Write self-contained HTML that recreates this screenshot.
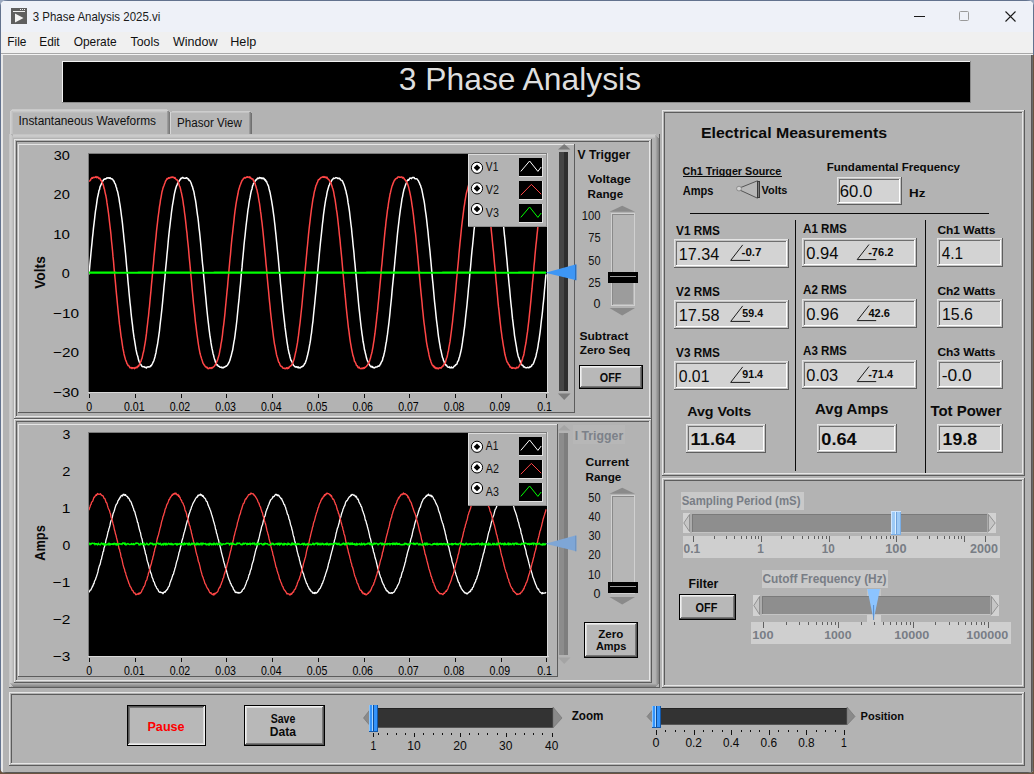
<!DOCTYPE html>
<html><head><meta charset="utf-8"><style>
html,body{margin:0;padding:0;background:#6b5440;width:1034px;height:774px;overflow:hidden}
svg{display:block;font-family:"Liberation Sans",sans-serif}
</style></head><body>
<svg width="1034" height="774" viewBox="0 0 1034 774">
<defs><clipPath id="win"><path d="M0,8 Q0,0 8,0 H1026 Q1034,0 1034,8 V767 Q1034,773 1028,773 H6 Q0,773 0,767 Z"/></clipPath><clipPath id="vplot"><rect x="89" y="154" width="458" height="238"/></clipPath><clipPath id="iplot"><rect x="89" y="433" width="458" height="223"/></clipPath></defs>
<rect x="0" y="0" width="1034" height="40" fill="#9aa8c0" />
<g clip-path="url(#win)">
<rect x="0" y="0" width="1034" height="774" fill="#62728e" />
<rect x="1" y="1" width="1032" height="772" fill="#e8e8e8" />
<rect x="1" y="1" width="1032" height="31" fill="#eef1f8" />
<rect x="1" y="32" width="1032" height="21" fill="#f0f0f0" />
<rect x="1" y="53" width="1032" height="1" fill="#a8a8a8" />
<rect x="1" y="54" width="1032" height="1" fill="#f4f4f4" />
<rect x="3" y="55" width="1028" height="717" fill="#b3b3b3" />
<rect x="1031" y="55" width="1" height="718" fill="#585858" />
<rect x="1032" y="55" width="1" height="718" fill="#6a6a6a" />
<rect x="3" y="772" width="1030" height="1" fill="#585858" />
<rect x="1033" y="55" width="1" height="719" fill="#6b5440" />
<rect x="0" y="773" width="1034" height="1" fill="#6b5440" />
</g>
<rect x="11" y="8" width="16" height="16" fill="#5f5f5f" />
<rect x="13" y="11" width="12" height="1" fill="#f0f0f0" />
<rect x="20" y="9" width="1" height="1" fill="#f0f0f0" />
<rect x="22" y="9" width="1" height="1" fill="#f0f0f0" />
<rect x="24" y="9" width="1" height="1" fill="#f0f0f0" />
<polygon points="15.00,13.50 15.00,22.50 23.50,18.00" fill="#f4f4f4" stroke="none" />
<text transform="translate(32.77,20.80) scale(0.9463,1)" font-size="12.14" font-weight="normal" fill="#1a1a1a" >3 Phase Analysis 2025.vi</text>
<rect x="914" y="16" width="11" height="1" fill="#1a1a1a" />
<rect x="959.5" y="11.5" width="9" height="9" rx="1" fill="none" stroke="#9a9a9a" stroke-width="1"/>
<path d="M1005.5,11.5 L1015.5,21.5 M1015.5,11.5 L1005.5,21.5" stroke="#1a1a1a" stroke-width="1.1" fill="none" />
<text transform="translate(7.32,46.00) scale(0.9773,1)" font-size="12.14" font-weight="normal" fill="#101010" >File</text>
<text transform="translate(39.22,46.00) scale(0.9783,1)" font-size="12.14" font-weight="normal" fill="#101010" >Edit</text>
<text transform="translate(73.63,46.00) scale(0.9471,1)" font-size="12.59" font-weight="normal" fill="#101010" >Operate</text>
<text transform="translate(130.52,46.00) scale(1.0170,1)" font-size="12.14" font-weight="normal" fill="#101010" >Tools</text>
<text transform="translate(172.94,46.00) scale(1.0313,1)" font-size="12.14" font-weight="normal" fill="#101010" >Window</text>
<text transform="translate(230.26,46.00) scale(1.0409,1)" font-size="12.14" font-weight="normal" fill="#101010" >Help</text>
<rect x="62" y="61" width="908" height="41" fill="#000" />
<rect x="62" y="61" width="908" height="1" fill="#f2f2f2" />
<rect x="62" y="61" width="1" height="41" fill="#f2f2f2" />
<rect x="970" y="61" width="1" height="42" fill="#8a8a8a" />
<rect x="62" y="102" width="909" height="1" fill="#8a8a8a" />
<text transform="translate(398.81,90.20) scale(1.0208,1)" font-size="31.17" font-weight="normal" fill="#dedede" >3 Phase Analysis</text>
<rect x="170" y="111" width="82" height="24" fill="#b6b6b6" />
<rect x="172" y="111" width="78" height="1" fill="#cdcdcd" />
<rect x="171" y="112" width="79" height="1" fill="#c4c4c4" />
<rect x="170" y="112" width="1" height="23" fill="#d6d6d6" />
<rect x="249" y="112" width="1" height="23" fill="#9a9a9a" />
<rect x="250" y="112" width="1" height="23" fill="#808080" />
<rect x="251" y="113" width="1" height="22" fill="#707070" />
<text transform="translate(177.04,127.00) scale(0.9346,1)" font-size="12.41" font-weight="normal" fill="#101010" >Phasor View</text>
<rect x="10" y="109" width="160" height="29" fill="#b7b7b7" />
<rect x="12" y="109" width="155" height="1" fill="#c9c9c9" />
<rect x="11" y="110" width="157" height="1" fill="#cfcfcf" />
<rect x="11" y="111" width="157" height="1" fill="#c6c6c6" />
<rect x="11" y="112" width="157" height="1" fill="#bdbdbd" />
<rect x="10" y="111" width="1" height="27" fill="#cfcfcf" />
<rect x="11" y="111" width="1" height="27" fill="#c8c8c8" />
<rect x="12" y="111" width="1" height="27" fill="#c0c0c0" />
<rect x="167" y="111" width="1" height="27" fill="#9c9c9c" />
<rect x="168" y="111" width="1" height="27" fill="#8a8a8a" />
<rect x="169" y="112" width="1" height="26" fill="#7a7a7a" />
<text transform="translate(18.50,124.80) scale(0.9894,1)" font-size="12.02" font-weight="normal" fill="#101010" >Instantaneous Waveforms</text>
<rect x="9" y="134" width="651" height="554" fill="#b3b3b3" />
<rect x="13" y="134" width="643" height="1" fill="#c4c4c4" />
<rect x="13" y="135" width="643" height="1" fill="#cbcbcb" />
<rect x="13" y="136" width="644" height="1" fill="#c8c8c8" />
<rect x="13" y="137" width="644" height="1" fill="#c0c0c0" />
<rect x="9" y="134" width="1" height="554" fill="#c6c6c6" />
<rect x="10" y="134" width="1" height="553" fill="#cdcdcd" />
<rect x="11" y="135" width="1" height="551" fill="#c9c9c9" />
<rect x="12" y="136" width="1" height="549" fill="#c0c0c0" />
<rect x="655" y="135" width="1" height="552" fill="#b0b0b0" />
<rect x="10" y="683" width="649" height="1" fill="#b0b0b0" />
<rect x="656" y="136" width="1" height="550" fill="#a2a2a2" />
<rect x="11" y="684" width="647" height="1" fill="#a2a2a2" />
<rect x="657" y="137" width="1" height="548" fill="#949494" />
<rect x="12" y="685" width="645" height="1" fill="#949494" />
<rect x="658" y="138" width="1" height="546" fill="#868686" />
<rect x="13" y="686" width="643" height="1" fill="#868686" />
<rect x="9" y="687" width="651" height="1" fill="#5e5e5e" />
<rect x="659" y="134" width="1" height="554" fill="#5e5e5e" />
<rect x="14" y="139" width="637" height="1" fill="#e6e6e6" />
<rect x="14" y="139" width="1" height="279" fill="#e6e6e6" />
<rect x="14" y="418" width="638" height="1" fill="#5c5c5c" />
<rect x="651" y="139" width="1" height="280" fill="#5c5c5c" />
<rect x="16" y="141" width="633" height="1" fill="#5c5c5c" />
<rect x="16" y="141" width="1" height="275" fill="#5c5c5c" />
<rect x="16" y="416" width="634" height="1" fill="#e6e6e6" />
<rect x="649" y="141" width="1" height="276" fill="#e6e6e6" />
<rect x="14" y="419" width="637" height="1" fill="#e6e6e6" />
<rect x="14" y="419" width="1" height="263" fill="#e6e6e6" />
<rect x="14" y="682" width="638" height="1" fill="#5c5c5c" />
<rect x="651" y="419" width="1" height="264" fill="#5c5c5c" />
<rect x="16" y="421" width="633" height="1" fill="#5c5c5c" />
<rect x="16" y="421" width="1" height="259" fill="#5c5c5c" />
<rect x="16" y="680" width="634" height="1" fill="#e6e6e6" />
<rect x="649" y="421" width="1" height="260" fill="#e6e6e6" />
<rect x="662" y="110" width="362" height="1" fill="#e6e6e6" />
<rect x="662" y="110" width="1" height="365" fill="#e6e6e6" />
<rect x="662" y="475" width="363" height="1" fill="#5c5c5c" />
<rect x="1024" y="110" width="1" height="366" fill="#5c5c5c" />
<rect x="664" y="112" width="358" height="1" fill="#5c5c5c" />
<rect x="664" y="112" width="1" height="361" fill="#5c5c5c" />
<rect x="664" y="473" width="359" height="1" fill="#e6e6e6" />
<rect x="1022" y="112" width="1" height="362" fill="#e6e6e6" />
<rect x="662" y="478" width="362" height="1" fill="#e6e6e6" />
<rect x="662" y="478" width="1" height="209" fill="#e6e6e6" />
<rect x="662" y="687" width="363" height="1" fill="#5c5c5c" />
<rect x="1024" y="478" width="1" height="210" fill="#5c5c5c" />
<rect x="664" y="480" width="358" height="1" fill="#5c5c5c" />
<rect x="664" y="480" width="1" height="205" fill="#5c5c5c" />
<rect x="664" y="685" width="359" height="1" fill="#e6e6e6" />
<rect x="1022" y="480" width="1" height="206" fill="#e6e6e6" />
<rect x="9" y="692" width="1015" height="1" fill="#e6e6e6" />
<rect x="9" y="692" width="1" height="73" fill="#e6e6e6" />
<rect x="9" y="765" width="1016" height="1" fill="#5c5c5c" />
<rect x="1024" y="692" width="1" height="74" fill="#5c5c5c" />
<rect x="11" y="694" width="1011" height="1" fill="#5c5c5c" />
<rect x="11" y="694" width="1" height="69" fill="#5c5c5c" />
<rect x="11" y="763" width="1012" height="1" fill="#e6e6e6" />
<rect x="1022" y="694" width="1" height="70" fill="#e6e6e6" />
<rect x="18" y="144" width="557" height="1" fill="#e6e6e6" />
<rect x="18" y="144" width="1" height="269" fill="#e6e6e6" />
<rect x="18" y="412" width="557" height="1" fill="#5c5c5c" />
<rect x="574" y="144" width="1" height="269" fill="#5c5c5c" />
<rect x="89" y="154" width="458" height="238" fill="#000" />
<rect x="88" y="153" width="460" height="1" fill="#7a7a7a" />
<rect x="88" y="153" width="1" height="240" fill="#7a7a7a" />
<rect x="88" y="392" width="461" height="1" fill="#d8d8d8" />
<rect x="547" y="153" width="1" height="240" fill="#d8d8d8" />
<g clip-path="url(#vplot)">
<polyline points="89.0,274.53 89.5,269.28 90.0,263.24 90.5,258.53 91.0,252.65 91.5,247.62 92.0,242.86 92.5,237.33 93.0,233.05 93.5,227.92 94.0,223.87 94.5,219.57 95.0,215.12 95.5,210.81 96.0,208.04 96.5,204.56 97.0,200.95 97.5,197.68 98.0,195.48 98.5,193.28 99.0,190.41 99.5,189.56 100.0,186.84 100.5,185.97 101.0,184.79 101.5,183.64 102.0,182.39 102.5,180.92 103.0,180.94 103.5,179.85 104.0,179.28 104.5,179.18 105.0,178.65 105.5,178.96 106.0,178.76 106.5,178.44 107.0,177.77 107.5,178.01 108.0,178.11 108.5,177.79 109.0,177.99 109.5,178.25 110.0,177.77 110.5,178.05 111.0,178.80 111.5,178.69 112.0,179.09 112.5,179.11 113.0,179.82 113.5,180.98 114.0,180.92 114.5,182.85 115.0,183.55 115.5,184.37 116.0,186.49 116.5,187.68 117.0,190.02 117.5,191.28 118.0,193.40 118.5,196.10 119.0,198.44 119.5,202.05 120.0,204.78 120.5,208.33 121.0,212.00 121.5,216.04 122.0,219.69 122.5,223.89 123.0,228.98 123.5,233.46 124.0,239.05 124.5,243.32 125.0,248.54 125.5,253.39 126.0,258.94 126.5,264.99 127.0,270.31 127.5,275.43 128.0,281.64 128.5,286.52 129.0,292.22 129.5,297.53 130.0,302.75 130.5,306.92 131.0,312.54 131.5,317.10 132.0,321.44 132.5,325.17 133.0,330.21 133.5,333.64 134.0,337.17 134.5,340.17 135.0,343.41 135.5,346.29 136.0,349.67 136.5,351.96 137.0,354.24 137.5,355.61 138.0,357.31 138.5,359.85 139.0,361.21 139.5,362.35 140.0,363.39 140.5,363.98 141.0,364.62 141.5,365.64 142.0,366.47 142.5,366.40 143.0,366.80 143.5,366.84 144.0,366.59 144.5,367.06 145.0,367.38 145.5,367.33 146.0,367.30 146.5,368.04 147.0,367.00 147.5,367.07 148.0,366.85 148.5,366.79 149.0,367.07 149.5,366.80 150.0,366.81 150.5,365.76 151.0,365.93 151.5,365.30 152.0,364.39 152.5,363.57 153.0,362.32 153.5,361.47 154.0,360.16 154.5,358.42 155.0,356.72 155.5,354.43 156.0,352.63 156.5,349.20 157.0,346.84 157.5,344.49 158.0,341.23 158.5,337.73 159.0,334.09 159.5,330.53 160.0,325.59 160.5,321.13 161.0,317.26 161.5,312.56 162.0,308.19 162.5,303.17 163.0,297.74 163.5,292.59 164.0,286.58 164.5,281.98 165.0,276.70 165.5,270.14 166.0,265.20 166.5,260.24 167.0,254.41 167.5,249.76 168.0,243.99 168.5,238.42 169.0,233.66 169.5,229.14 170.0,225.12 170.5,220.65 171.0,216.75 171.5,212.12 172.0,208.73 172.5,204.99 173.0,202.32 173.5,199.48 174.0,196.06 174.5,193.36 175.0,191.26 175.5,189.28 176.0,187.45 176.5,185.93 177.0,185.12 177.5,183.54 178.0,182.66 178.5,182.13 179.0,181.36 179.5,180.41 180.0,179.89 180.5,178.93 181.0,178.26 181.5,178.58 182.0,177.78 182.5,177.55 183.0,177.48 183.5,178.10 184.0,178.23 184.5,178.22 185.0,178.28 185.5,178.33 186.0,177.93 186.5,177.75 187.0,178.02 187.5,178.70 188.0,178.82 188.5,179.05 189.0,180.39 189.5,180.31 190.0,180.74 190.5,181.74 191.0,182.79 191.5,184.27 192.0,185.97 192.5,186.77 193.0,189.05 193.5,190.43 194.0,192.39 194.5,195.46 195.0,198.08 195.5,200.29 196.0,203.66 196.5,207.66 197.0,211.30 197.5,215.08 198.0,218.22 198.5,222.59 199.0,227.84 199.5,231.68 200.0,236.32 200.5,241.68 201.0,247.16 201.5,252.15 202.0,257.97 202.5,263.50 203.0,267.80 203.5,273.63 204.0,279.23 204.5,284.17 205.0,290.13 205.5,294.89 206.0,300.13 206.5,305.93 207.0,310.79 207.5,315.50 208.0,320.13 208.5,324.10 209.0,328.66 209.5,332.41 210.0,336.48 210.5,339.03 211.0,342.94 211.5,345.82 212.0,348.44 212.5,350.58 213.0,353.45 213.5,354.93 214.0,357.28 214.5,358.89 215.0,360.35 215.5,362.22 216.0,362.82 216.5,364.06 217.0,365.08 217.5,364.80 218.0,366.10 218.5,366.20 219.0,366.27 219.5,366.77 220.0,367.27 220.5,367.22 221.0,367.30 221.5,367.11 222.0,367.97 222.5,367.44 223.0,367.79 223.5,367.70 224.0,367.02 224.5,367.19 225.0,366.94 225.5,366.46 226.0,365.97 226.5,366.14 227.0,365.46 227.5,365.00 228.0,364.29 228.5,363.24 229.0,362.55 229.5,361.32 230.0,360.07 230.5,358.03 231.0,356.62 231.5,354.50 232.0,352.30 232.5,350.76 233.0,347.82 233.5,344.54 234.0,341.60 234.5,339.13 235.0,335.61 235.5,331.46 236.0,327.89 236.5,323.47 237.0,319.25 237.5,313.92 238.0,308.99 238.5,303.90 239.0,299.69 239.5,293.81 240.0,288.57 240.5,283.81 241.0,277.50 241.5,271.94 242.0,267.38 242.5,261.08 243.0,256.36 243.5,250.95 244.0,245.15 244.5,240.26 245.0,236.11 245.5,231.01 246.0,226.31 246.5,222.11 247.0,218.07 247.5,213.94 248.0,209.70 248.5,207.02 249.0,203.09 249.5,200.18 250.0,197.88 250.5,194.94 251.0,192.26 251.5,190.29 252.0,188.93 252.5,186.15 253.0,184.91 253.5,183.39 254.0,183.30 254.5,182.14 255.0,181.59 255.5,180.02 256.0,180.04 256.5,179.74 257.0,179.01 257.5,178.12 258.0,177.99 258.5,178.47 259.0,178.47 259.5,177.46 260.0,177.82 260.5,177.65 261.0,178.39 261.5,178.48 262.0,177.82 262.5,178.26 263.0,178.86 263.5,178.06 264.0,178.72 264.5,178.90 265.0,180.22 265.5,179.87 266.0,181.49 266.5,181.35 267.0,182.79 267.5,184.03 268.0,185.06 268.5,186.08 269.0,188.52 269.5,190.56 270.0,192.17 270.5,194.83 271.0,197.53 271.5,200.25 272.0,203.40 272.5,206.48 273.0,209.86 273.5,213.60 274.0,217.02 274.5,221.77 275.0,225.91 275.5,230.88 276.0,235.44 276.5,240.76 277.0,245.56 277.5,251.03 278.0,255.47 278.5,261.06 279.0,266.91 279.5,272.02 280.0,276.93 280.5,283.35 281.0,287.89 281.5,293.66 282.0,298.81 282.5,303.51 283.0,309.00 283.5,313.68 284.0,318.10 284.5,322.19 285.0,327.19 285.5,330.63 286.0,334.58 286.5,338.22 287.0,341.82 287.5,344.98 288.0,348.17 288.5,350.69 289.0,353.13 289.5,354.48 290.0,356.98 290.5,358.80 291.0,360.41 291.5,360.84 292.0,361.96 292.5,363.19 293.0,364.49 293.5,365.25 294.0,365.79 294.5,366.08 295.0,366.84 295.5,366.81 296.0,367.28 296.5,366.64 297.0,366.77 297.5,367.37 298.0,367.79 298.5,366.96 299.0,367.73 299.5,367.63 300.0,367.97 300.5,367.39 301.0,367.11 301.5,366.86 302.0,366.93 302.5,366.20 303.0,366.35 303.5,365.49 304.0,365.04 304.5,363.88 305.0,363.38 305.5,362.32 306.0,360.74 306.5,359.39 307.0,357.34 307.5,355.57 308.0,353.26 308.5,351.10 309.0,348.52 309.5,345.59 310.0,343.19 310.5,340.04 311.0,335.79 311.5,333.09 312.0,328.48 312.5,324.43 313.0,320.78 313.5,315.28 314.0,310.48 314.5,305.89 315.0,300.72 315.5,295.45 316.0,290.97 316.5,285.15 317.0,279.76 317.5,273.92 318.0,268.50 318.5,263.03 319.0,257.93 319.5,252.23 320.0,247.24 320.5,242.10 321.0,237.66 321.5,233.06 322.0,228.27 322.5,223.53 323.0,219.56 323.5,214.63 324.0,211.12 324.5,207.44 325.0,204.08 325.5,200.89 326.0,198.23 326.5,196.16 327.0,192.81 327.5,190.68 328.0,189.01 328.5,187.23 329.0,185.53 329.5,184.88 330.0,182.90 330.5,182.46 331.0,181.80 331.5,180.84 332.0,179.68 332.5,179.80 333.0,178.75 333.5,178.14 334.0,178.45 334.5,178.38 335.0,178.12 335.5,177.77 336.0,177.60 336.5,177.75 337.0,177.73 337.5,178.44 338.0,178.43 338.5,178.42 339.0,177.99 339.5,178.73 340.0,178.69 340.5,179.70 341.0,180.08 341.5,180.36 342.0,180.52 342.5,181.27 343.0,182.19 343.5,183.70 344.0,184.66 344.5,186.12 345.0,187.71 345.5,189.92 346.0,191.01 346.5,194.08 347.0,195.62 347.5,198.37 348.0,202.41 348.5,205.06 349.0,208.06 349.5,211.54 350.0,216.05 350.5,220.37 351.0,224.77 351.5,228.41 352.0,234.00 352.5,238.43 353.0,243.98 353.5,248.68 354.0,253.43 354.5,259.76 355.0,264.35 355.5,270.16 356.0,275.17 356.5,280.83 357.0,286.80 357.5,291.35 358.0,297.09 358.5,302.79 359.0,307.83 359.5,312.11 360.0,316.86 360.5,321.54 361.0,326.04 361.5,329.90 362.0,333.80 362.5,336.82 363.0,341.22 363.5,343.50 364.0,346.32 364.5,349.86 365.0,351.35 365.5,353.82 366.0,355.59 366.5,358.10 367.0,359.59 367.5,360.95 368.0,361.44 368.5,362.97 369.0,364.13 369.5,364.81 370.0,365.62 370.5,366.42 371.0,366.78 371.5,366.25 372.0,367.18 372.5,366.61 373.0,367.59 373.5,367.68 374.0,367.46 374.5,367.88 375.0,367.66 375.5,366.93 376.0,366.95 376.5,366.93 377.0,366.99 377.5,366.45 378.0,366.15 378.5,366.28 379.0,365.66 379.5,365.94 380.0,364.51 380.5,364.10 381.0,362.86 381.5,361.96 382.0,361.19 382.5,360.11 383.0,357.50 383.5,356.69 384.0,354.30 384.5,352.26 385.0,349.88 385.5,346.69 386.0,343.51 386.5,341.22 387.0,337.36 387.5,334.17 388.0,330.01 388.5,326.13 389.0,322.11 389.5,317.62 390.0,312.89 390.5,307.21 391.0,302.70 391.5,297.89 392.0,291.83 392.5,286.38 393.0,281.63 393.5,276.56 394.0,271.04 394.5,265.72 395.0,260.01 395.5,254.95 396.0,249.50 396.5,244.31 397.0,238.91 397.5,233.64 398.0,229.08 398.5,224.94 399.0,220.59 399.5,216.33 400.0,212.59 400.5,208.96 401.0,205.84 401.5,202.38 402.0,198.59 402.5,196.87 403.0,193.93 403.5,191.53 404.0,189.22 404.5,188.17 405.0,186.49 405.5,185.10 406.0,183.68 406.5,182.55 407.0,181.03 407.5,180.38 408.0,179.70 408.5,180.17 409.0,179.72 409.5,178.55 410.0,178.05 410.5,178.33 411.0,178.03 411.5,178.61 412.0,178.07 412.5,177.39 413.0,177.50 413.5,177.49 414.0,177.42 414.5,178.38 415.0,178.69 415.5,178.83 416.0,178.65 416.5,178.78 417.0,178.88 417.5,179.64 418.0,180.33 418.5,180.91 419.0,182.13 419.5,183.02 420.0,184.80 420.5,185.25 421.0,187.44 421.5,188.35 422.0,190.61 422.5,193.18 423.0,195.78 423.5,198.26 424.0,200.66 424.5,203.69 425.0,207.73 425.5,211.36 426.0,214.64 426.5,218.60 427.0,223.09 427.5,227.75 428.0,231.94 428.5,237.47 429.0,242.10 429.5,247.03 430.0,251.66 430.5,257.36 431.0,262.46 431.5,268.39 432.0,274.13 432.5,279.56 433.0,284.13 433.5,289.81 434.0,295.56 434.5,301.09 435.0,305.58 435.5,310.29 436.0,315.35 436.5,320.11 437.0,324.00 437.5,327.86 438.0,332.64 438.5,336.59 439.0,339.71 439.5,342.86 440.0,345.55 440.5,348.90 441.0,350.71 441.5,353.07 442.0,355.42 442.5,357.63 443.0,358.37 443.5,360.60 444.0,361.27 444.5,363.06 445.0,364.02 445.5,364.17 446.0,365.40 446.5,365.18 447.0,366.18 447.5,366.91 448.0,367.17 448.5,367.16 449.0,367.04 449.5,366.83 450.0,367.87 450.5,367.63 451.0,367.85 451.5,366.93 452.0,367.86 452.5,367.87 453.0,367.73 453.5,367.14 454.0,366.30 454.5,366.00 455.0,365.79 455.5,365.00 456.0,364.49 456.5,364.51 457.0,363.85 457.5,361.98 458.0,361.06 458.5,360.60 459.0,358.35 459.5,357.00 460.0,355.10 460.5,353.03 461.0,350.87 461.5,348.48 462.0,345.33 462.5,342.18 463.0,338.16 463.5,335.61 464.0,330.83 464.5,327.73 465.0,323.34 465.5,318.36 466.0,313.74 466.5,309.41 467.0,304.91 467.5,299.31 468.0,294.22 468.5,288.26 469.0,283.75 469.5,278.11 470.0,272.02 470.5,267.60 471.0,261.72 471.5,255.87 472.0,250.62 472.5,246.28 473.0,241.21 473.5,236.23 474.0,230.43 474.5,226.61 475.0,221.62 475.5,217.24 476.0,213.92 476.5,210.24 477.0,205.90 477.5,203.02 478.0,200.40 478.5,197.05 479.0,194.96 479.5,192.67 480.0,190.89 480.5,188.11 481.0,186.24 481.5,185.09 482.0,183.42 482.5,183.39 483.0,182.18 483.5,181.07 484.0,179.80 484.5,179.23 485.0,179.43 485.5,179.21 486.0,178.69 486.5,178.38 487.0,177.68 487.5,178.43 488.0,177.60 488.5,177.62 489.0,177.50 489.5,177.58 490.0,177.83 490.5,178.25 491.0,178.39 491.5,178.51 492.0,178.25 492.5,179.38 493.0,179.62 493.5,179.42 494.0,180.59 494.5,181.49 495.0,182.33 495.5,182.67 496.0,184.05 496.5,184.55 497.0,186.13 497.5,187.67 498.0,190.40 498.5,192.70 499.0,195.00 499.5,197.06 500.0,199.59 500.5,202.93 501.0,206.45 501.5,209.73 502.0,213.22 502.5,217.13 503.0,221.22 503.5,225.50 504.0,230.30 504.5,235.71 505.0,239.78 505.5,245.51 506.0,250.37 506.5,255.90 507.0,260.83 507.5,266.90 508.0,272.29 508.5,277.75 509.0,283.29 509.5,287.81 510.0,293.49 510.5,299.01 511.0,304.03 511.5,308.29 512.0,313.68 512.5,318.64 513.0,322.40 513.5,326.82 514.0,330.44 514.5,335.30 515.0,338.42 515.5,341.33 516.0,344.39 516.5,347.15 517.0,350.79 517.5,352.87 518.0,355.22 518.5,357.06 519.0,357.84 519.5,359.82 520.0,360.73 520.5,362.55 521.0,362.95 521.5,364.29 522.0,365.23 522.5,365.21 523.0,365.50 523.5,366.90 524.0,366.63 524.5,366.85 525.0,367.52 525.5,367.49 526.0,367.85 526.5,367.84 527.0,367.80 527.5,367.38 528.0,367.28 528.5,367.73 529.0,367.84 529.5,367.29 530.0,366.65 530.5,366.95 531.0,366.43 531.5,366.11 532.0,364.86 532.5,364.49 533.0,364.28 533.5,363.31 534.0,361.88 534.5,360.44 535.0,358.91 535.5,357.93 536.0,356.01 536.5,353.33 537.0,351.39 537.5,349.04 538.0,346.27 538.5,342.51 539.0,340.05 539.5,336.29 540.0,332.84 540.5,328.84 541.0,324.16 541.5,319.65 542.0,315.84 542.5,311.31 543.0,305.77 543.5,301.35 544.0,296.41 544.5,290.06 545.0,285.27 545.5,279.38 546.0,274.43" fill="none" stroke="#ffffff" stroke-width="1.5" stroke-linejoin="round"/>
<polyline points="89.0,181.52 89.5,181.06 90.0,180.60 90.5,180.09 91.0,178.88 91.5,178.31 92.0,177.61 92.5,178.28 93.0,177.41 93.5,177.53 94.0,177.24 94.5,177.58 95.0,177.37 95.5,177.07 96.0,176.61 96.5,177.63 97.0,177.27 97.5,177.03 98.0,177.02 98.5,178.18 99.0,178.58 99.5,177.99 100.0,178.43 100.5,179.60 101.0,180.81 101.5,180.60 102.0,182.21 102.5,182.74 103.0,184.38 103.5,185.63 104.0,188.12 104.5,189.28 105.0,192.08 105.5,194.22 106.0,196.28 106.5,199.13 107.0,202.97 107.5,206.24 108.0,209.58 108.5,213.23 109.0,217.41 109.5,221.96 110.0,226.26 110.5,230.34 111.0,234.95 111.5,240.96 112.0,245.46 112.5,250.48 113.0,256.68 113.5,261.15 114.0,267.48 114.5,272.41 115.0,277.97 115.5,283.35 116.0,289.16 116.5,294.37 117.0,299.43 117.5,304.76 118.0,309.47 118.5,314.56 119.0,319.22 119.5,324.18 120.0,327.72 120.5,331.91 121.0,336.02 121.5,338.96 122.0,342.27 122.5,345.74 123.0,348.92 123.5,351.17 124.0,353.98 124.5,356.09 125.0,357.65 125.5,359.76 126.0,360.85 126.5,362.09 127.0,363.80 127.5,364.07 128.0,365.57 128.5,365.50 129.0,366.04 129.5,366.84 130.0,367.78 130.5,367.56 131.0,367.95 131.5,367.46 132.0,368.57 132.5,367.80 133.0,367.69 133.5,368.03 134.0,367.92 134.5,368.61 135.0,367.58 135.5,368.04 136.0,367.31 136.5,367.13 137.0,367.72 137.5,366.61 138.0,365.98 138.5,366.44 139.0,365.43 139.5,364.14 140.0,363.90 140.5,361.91 141.0,361.37 141.5,359.27 142.0,358.40 142.5,356.11 143.0,353.52 143.5,352.05 144.0,349.44 144.5,346.36 145.0,343.55 145.5,340.61 146.0,336.92 146.5,333.20 147.0,328.29 147.5,324.40 148.0,319.72 148.5,315.98 149.0,310.45 149.5,306.29 150.0,300.69 150.5,295.33 151.0,290.33 151.5,284.31 152.0,279.22 152.5,273.70 153.0,267.84 153.5,263.28 154.0,256.79 154.5,251.85 155.0,246.86 155.5,241.22 156.0,236.84 156.5,231.11 157.0,226.92 157.5,222.68 158.0,217.91 158.5,214.23 159.0,210.70 159.5,206.41 160.0,203.87 160.5,199.83 161.0,197.61 161.5,194.51 162.0,191.69 162.5,189.99 163.0,187.94 163.5,186.62 164.0,185.45 164.5,184.06 165.0,182.74 165.5,181.18 166.0,180.54 166.5,179.71 167.0,178.65 167.5,179.06 168.0,178.54 168.5,177.70 169.0,178.20 169.5,178.03 170.0,177.46 170.5,177.65 171.0,177.29 171.5,177.42 172.0,177.00 172.5,177.04 173.0,177.58 173.5,177.20 174.0,177.54 174.5,178.17 175.0,177.50 175.5,178.69 176.0,179.24 176.5,179.85 177.0,179.87 177.5,180.37 178.0,181.40 178.5,182.94 179.0,184.35 179.5,186.08 180.0,186.96 180.5,188.89 181.0,191.19 181.5,193.12 182.0,195.87 182.5,198.03 183.0,201.26 183.5,205.08 184.0,207.77 184.5,212.51 185.0,215.87 185.5,220.19 186.0,224.77 186.5,229.56 187.0,233.47 187.5,239.31 188.0,243.75 188.5,248.50 189.0,254.77 189.5,260.10 190.0,265.07 190.5,270.68 191.0,276.03 191.5,281.31 192.0,287.51 192.5,292.73 193.0,298.03 193.5,303.51 194.0,307.55 194.5,312.57 195.0,317.36 195.5,322.73 196.0,326.06 196.5,330.29 197.0,334.50 197.5,337.82 198.0,341.58 198.5,345.01 199.0,348.08 199.5,350.62 200.0,353.29 200.5,355.16 201.0,356.66 201.5,358.50 202.0,359.89 202.5,361.43 203.0,363.17 203.5,363.86 204.0,364.89 204.5,365.22 205.0,366.16 205.5,366.98 206.0,366.96 206.5,366.91 207.0,368.07 207.5,367.49 208.0,368.67 208.5,368.49 209.0,368.58 209.5,368.01 210.0,367.77 210.5,367.97 211.0,368.40 211.5,367.63 212.0,368.12 212.5,368.02 213.0,366.95 213.5,366.93 214.0,366.43 214.5,365.93 215.0,364.92 215.5,364.76 216.0,363.42 216.5,362.54 217.0,361.13 217.5,360.23 218.0,358.29 218.5,356.67 219.0,354.97 219.5,352.85 220.0,349.89 220.5,347.83 221.0,343.88 221.5,341.60 222.0,338.31 222.5,334.54 223.0,329.65 223.5,326.22 224.0,322.11 224.5,317.70 225.0,312.95 225.5,307.27 226.0,302.28 226.5,297.02 227.0,291.67 227.5,287.08 228.0,281.01 228.5,275.79 229.0,269.75 229.5,264.25 230.0,258.71 230.5,254.30 231.0,248.04 231.5,242.79 232.0,237.69 232.5,233.77 233.0,228.90 233.5,224.46 234.0,220.19 234.5,215.08 235.0,211.20 235.5,207.72 236.0,204.04 236.5,201.07 237.0,198.51 237.5,196.01 238.0,193.52 238.5,190.49 239.0,189.11 239.5,187.17 240.0,185.43 240.5,184.50 241.0,182.99 241.5,181.90 242.0,180.47 242.5,180.11 243.0,179.52 243.5,178.22 244.0,178.33 244.5,177.57 245.0,177.57 245.5,178.05 246.0,177.43 246.5,177.29 247.0,176.82 247.5,177.28 248.0,176.85 248.5,177.08 249.0,177.53 249.5,176.87 250.0,177.94 250.5,177.27 251.0,178.31 251.5,178.84 252.0,179.02 252.5,178.87 253.0,179.23 253.5,181.13 254.0,181.43 254.5,182.45 255.0,183.28 255.5,185.38 256.0,186.57 256.5,188.51 257.0,189.91 257.5,192.79 258.0,194.41 258.5,197.87 259.0,200.86 259.5,203.43 260.0,207.07 260.5,211.16 261.0,214.41 261.5,219.16 262.0,222.63 262.5,227.25 263.0,231.85 263.5,236.92 264.0,242.28 264.5,247.39 265.0,252.68 265.5,257.47 266.0,263.87 266.5,268.40 267.0,274.93 267.5,280.20 268.0,285.60 268.5,290.24 269.0,296.04 269.5,301.40 270.0,305.89 270.5,311.61 271.0,316.11 271.5,320.62 272.0,324.75 272.5,328.93 273.0,333.02 273.5,337.10 274.0,340.62 274.5,344.07 275.0,346.26 275.5,349.24 276.0,351.67 276.5,354.64 277.0,356.39 277.5,357.84 278.0,359.71 278.5,361.69 279.0,362.55 279.5,363.14 280.0,364.84 280.5,365.69 281.0,366.23 281.5,366.30 282.0,366.59 282.5,367.77 283.0,368.06 283.5,368.18 284.0,368.25 284.5,368.14 285.0,368.65 285.5,368.50 286.0,368.67 286.5,367.71 287.0,367.95 287.5,368.59 288.0,367.43 288.5,368.26 289.0,367.67 289.5,366.63 290.0,366.46 290.5,366.04 291.0,365.79 291.5,365.36 292.0,363.98 292.5,363.61 293.0,362.33 293.5,360.77 294.0,359.67 294.5,357.50 295.0,355.09 295.5,353.05 296.0,350.88 296.5,348.10 297.0,345.43 297.5,342.70 298.0,338.79 298.5,335.44 299.0,331.21 299.5,326.95 300.0,323.24 300.5,318.59 301.0,313.71 301.5,309.25 302.0,304.47 302.5,298.73 303.0,293.28 303.5,288.04 304.0,282.70 304.5,277.04 305.0,271.74 305.5,266.29 306.0,261.05 306.5,255.80 307.0,250.09 307.5,245.48 308.0,239.99 308.5,234.58 309.0,229.86 309.5,225.34 310.0,221.36 310.5,216.94 311.0,212.90 311.5,208.94 312.0,205.66 312.5,202.06 313.0,198.71 313.5,196.79 314.0,193.66 314.5,191.19 315.0,189.55 315.5,187.54 316.0,185.29 316.5,184.93 317.0,183.04 317.5,182.38 318.0,180.68 318.5,179.67 319.0,179.49 319.5,179.42 320.0,178.39 320.5,178.05 321.0,177.54 321.5,177.54 322.0,177.21 322.5,176.86 323.0,177.14 323.5,177.22 324.0,176.56 324.5,177.46 325.0,176.95 325.5,177.39 326.0,177.08 326.5,178.03 327.0,177.25 327.5,178.30 328.0,179.05 328.5,179.27 329.0,179.70 329.5,180.86 330.0,181.20 330.5,182.18 331.0,182.98 331.5,184.70 332.0,186.30 332.5,188.04 333.0,189.33 333.5,191.22 334.0,194.07 334.5,197.03 335.0,199.16 335.5,202.72 336.0,206.25 336.5,209.90 337.0,212.92 337.5,216.90 338.0,221.35 338.5,226.00 339.0,230.53 339.5,235.75 340.0,239.86 340.5,245.71 341.0,250.62 341.5,255.75 342.0,261.18 342.5,267.06 343.0,272.77 343.5,277.97 344.0,283.95 344.5,288.53 345.0,294.45 345.5,299.12 346.0,304.94 346.5,309.81 347.0,314.79 347.5,319.24 348.0,323.99 348.5,328.46 349.0,331.64 349.5,335.96 350.0,339.58 350.5,342.84 351.0,345.72 351.5,348.62 352.0,350.98 352.5,353.32 353.0,355.81 353.5,357.06 354.0,358.86 354.5,361.31 355.0,361.72 355.5,362.77 356.0,363.90 356.5,365.50 357.0,365.39 357.5,366.21 358.0,367.43 358.5,367.83 359.0,367.02 359.5,367.62 360.0,368.29 360.5,368.61 361.0,368.65 361.5,368.60 362.0,367.98 362.5,368.47 363.0,368.66 363.5,367.68 364.0,367.68 364.5,368.25 365.0,367.16 365.5,367.20 366.0,366.62 366.5,366.29 367.0,365.46 367.5,364.91 368.0,364.04 368.5,363.85 369.0,362.16 369.5,361.07 370.0,359.35 370.5,358.05 371.0,355.66 371.5,353.96 372.0,351.99 372.5,349.47 373.0,346.80 373.5,343.34 374.0,340.59 374.5,336.59 375.0,333.22 375.5,328.82 376.0,324.61 376.5,320.15 377.0,315.15 377.5,311.38 378.0,305.42 378.5,300.76 379.0,295.42 379.5,289.97 380.0,284.35 380.5,279.44 381.0,273.89 381.5,267.74 382.0,263.31 382.5,257.21 383.0,251.85 383.5,247.30 384.0,241.45 384.5,236.34 385.0,231.18 385.5,227.21 386.0,221.94 386.5,218.22 387.0,214.18 387.5,209.84 388.0,207.26 388.5,203.07 389.0,200.06 389.5,197.51 390.0,194.25 390.5,192.43 391.0,190.12 391.5,188.10 392.0,186.07 392.5,185.20 393.0,183.58 393.5,182.42 394.0,181.25 394.5,180.07 395.0,179.97 395.5,178.73 396.0,178.73 396.5,178.21 397.0,178.16 397.5,177.62 398.0,176.87 398.5,177.10 399.0,176.84 399.5,177.32 400.0,177.31 400.5,177.34 401.0,177.04 401.5,177.06 402.0,177.01 402.5,178.06 403.0,177.47 403.5,177.56 404.0,178.33 404.5,179.36 405.0,179.61 405.5,180.62 406.0,181.18 406.5,181.24 407.0,182.69 407.5,183.88 408.0,185.16 408.5,186.64 409.0,188.83 409.5,190.88 410.0,193.14 410.5,195.57 411.0,198.44 411.5,201.33 412.0,205.12 412.5,208.05 413.0,212.01 413.5,215.60 414.0,220.55 414.5,224.83 415.0,229.59 415.5,233.47 416.0,238.24 416.5,243.63 417.0,249.18 417.5,253.96 418.0,259.40 418.5,265.12 419.0,270.98 419.5,276.43 420.0,281.77 420.5,287.34 421.0,292.59 421.5,297.62 422.0,302.45 422.5,308.54 423.0,312.82 423.5,318.17 424.0,322.60 424.5,326.10 425.0,330.49 425.5,333.96 426.0,338.17 426.5,342.10 427.0,344.82 427.5,347.50 428.0,349.78 428.5,352.17 429.0,354.99 429.5,357.06 430.0,359.20 430.5,360.13 431.0,362.03 431.5,363.30 432.0,364.50 432.5,365.40 433.0,365.34 433.5,366.64 434.0,366.15 434.5,367.62 435.0,367.02 435.5,368.17 436.0,368.51 436.5,367.83 437.0,368.51 437.5,367.99 438.0,368.67 438.5,368.83 439.0,367.94 439.5,367.94 440.0,367.65 440.5,367.65 441.0,368.20 441.5,367.28 442.0,366.84 442.5,366.70 443.0,365.61 443.5,365.78 444.0,364.17 444.5,363.57 445.0,363.35 445.5,362.13 446.0,359.97 446.5,358.18 447.0,357.26 447.5,354.97 448.0,352.23 448.5,350.43 449.0,346.89 449.5,344.39 450.0,341.70 450.5,337.90 451.0,333.98 451.5,330.24 452.0,325.82 452.5,322.11 453.0,316.79 453.5,312.57 454.0,307.33 454.5,302.29 455.0,297.35 455.5,292.09 456.0,286.22 456.5,280.58 457.0,275.29 457.5,270.04 458.0,264.88 458.5,259.70 459.0,253.22 459.5,248.24 460.0,242.89 460.5,238.42 461.0,233.17 461.5,227.99 462.0,223.60 462.5,219.51 463.0,215.72 463.5,211.65 464.0,207.42 464.5,204.58 465.0,201.00 465.5,198.14 466.0,195.06 466.5,192.68 467.0,191.05 467.5,189.36 468.0,187.23 468.5,185.44 469.0,183.83 469.5,182.32 470.0,181.18 470.5,181.27 471.0,179.56 471.5,178.94 472.0,178.34 472.5,178.25 473.0,178.26 473.5,177.29 474.0,177.13 474.5,177.11 475.0,176.72 475.5,177.32 476.0,177.60 476.5,177.03 477.0,176.77 477.5,177.55 478.0,177.00 478.5,176.94 479.0,177.97 479.5,177.79 480.0,178.04 480.5,178.71 481.0,179.53 481.5,180.09 482.0,180.24 482.5,181.07 483.0,182.49 483.5,184.12 484.0,184.64 484.5,186.24 485.0,188.65 485.5,190.21 486.0,192.03 486.5,194.48 487.0,197.58 487.5,200.55 488.0,203.57 488.5,207.44 489.0,211.07 489.5,214.95 490.0,218.42 490.5,223.14 491.0,227.41 491.5,232.31 492.0,237.05 492.5,242.52 493.0,247.82 493.5,251.97 494.0,258.08 494.5,263.84 495.0,268.70 495.5,274.02 496.0,280.26 496.5,285.20 497.0,290.90 497.5,296.02 498.0,301.83 498.5,306.90 499.0,310.71 499.5,315.63 500.0,320.68 500.5,324.97 501.0,329.52 501.5,332.86 502.0,337.01 502.5,339.88 503.0,343.34 503.5,346.29 504.0,348.88 504.5,352.25 505.0,354.80 505.5,356.67 506.0,358.54 506.5,360.30 507.0,361.78 507.5,362.44 508.0,363.16 508.5,364.58 509.0,364.79 509.5,365.50 510.0,367.06 510.5,366.88 511.0,367.48 511.5,368.10 512.0,367.33 512.5,368.33 513.0,368.09 513.5,368.08 514.0,367.75 514.5,368.10 515.0,368.41 515.5,368.28 516.0,368.53 516.5,367.42 517.0,367.20 517.5,367.86 518.0,367.76 518.5,367.10 519.0,366.49 519.5,365.23 520.0,364.51 520.5,363.74 521.0,363.68 521.5,361.64 522.0,360.39 522.5,358.94 523.0,356.80 523.5,355.97 524.0,353.70 524.5,350.58 525.0,347.73 525.5,345.17 526.0,342.51 526.5,338.81 527.0,335.02 527.5,331.96 528.0,327.65 528.5,323.45 529.0,319.13 529.5,314.03 530.0,309.55 530.5,304.45 531.0,299.42 531.5,293.52 532.0,288.95 532.5,282.68 533.0,277.82 533.5,272.51 534.0,265.95 534.5,261.32 535.0,255.06 535.5,249.80 536.0,244.54 536.5,240.32 537.0,234.98 537.5,230.60 538.0,224.98 538.5,220.66 539.0,216.69 539.5,212.91 540.0,209.27 540.5,205.17 541.0,202.29 541.5,199.07 542.0,196.84 542.5,194.18 543.0,192.05 543.5,189.16 544.0,187.47 544.5,186.28 545.0,183.94 545.5,183.37 546.0,182.08" fill="none" stroke="#ff4646" stroke-width="1.5" stroke-linejoin="round"/>
<polyline points="89.0,272.66 89.5,272.66 90.0,272.66 90.5,272.66 91.0,272.66 91.5,272.66 92.0,272.66 92.5,272.66 93.0,272.66 93.5,272.66 94.0,272.66 94.5,272.66 95.0,272.67 95.5,272.67 96.0,272.67 96.5,272.67 97.0,272.67 97.5,272.67 98.0,272.67 98.5,272.67 99.0,272.67 99.5,272.68 100.0,272.68 100.5,272.68 101.0,272.68 101.5,272.68 102.0,272.68 102.5,272.68 103.0,272.68 103.5,272.69 104.0,272.69 104.5,272.69 105.0,272.69 105.5,272.69 106.0,272.69 106.5,272.70 107.0,272.70 107.5,272.70 108.0,272.70 108.5,272.70 109.0,272.70 109.5,272.71 110.0,272.71 110.5,272.71 111.0,272.71 111.5,272.71 112.0,272.71 112.5,272.72 113.0,272.72 113.5,272.72 114.0,272.72 114.5,272.72 115.0,272.72 115.5,272.72 116.0,272.72 116.5,272.73 117.0,272.73 117.5,272.73 118.0,272.73 118.5,272.73 119.0,272.73 119.5,272.73 120.0,272.73 120.5,272.73 121.0,272.74 121.5,272.74 122.0,272.74 122.5,272.74 123.0,272.74 123.5,272.74 124.0,272.74 124.5,272.74 125.0,272.74 125.5,272.74 126.0,272.74 126.5,272.74 127.0,272.74 127.5,272.74 128.0,272.74 128.5,272.74 129.0,272.74 129.5,272.74 130.0,272.74 130.5,272.74 131.0,272.74 131.5,272.74 132.0,272.74 132.5,272.74 133.0,272.73 133.5,272.73 134.0,272.73 134.5,272.73 135.0,272.73 135.5,272.73 136.0,272.73 136.5,272.73 137.0,272.73 137.5,272.73 138.0,272.72 138.5,272.72 139.0,272.72 139.5,272.72 140.0,272.72 140.5,272.72 141.0,272.72 141.5,272.71 142.0,272.71 142.5,272.71 143.0,272.71 143.5,272.71 144.0,272.71 144.5,272.70 145.0,272.70 145.5,272.70 146.0,272.70 146.5,272.70 147.0,272.70 147.5,272.69 148.0,272.69 148.5,272.69 149.0,272.69 149.5,272.69 150.0,272.69 150.5,272.69 151.0,272.68 151.5,272.68 152.0,272.68 152.5,272.68 153.0,272.68 153.5,272.68 154.0,272.68 154.5,272.67 155.0,272.67 155.5,272.67 156.0,272.67 156.5,272.67 157.0,272.67 157.5,272.67 158.0,272.67 158.5,272.67 159.0,272.66 159.5,272.66 160.0,272.66 160.5,272.66 161.0,272.66 161.5,272.66 162.0,272.66 162.5,272.66 163.0,272.66 163.5,272.66 164.0,272.66 164.5,272.66 165.0,272.66 165.5,272.66 166.0,272.66 166.5,272.66 167.0,272.66 167.5,272.66 168.0,272.66 168.5,272.66 169.0,272.66 169.5,272.66 170.0,272.66 170.5,272.66 171.0,272.67 171.5,272.67 172.0,272.67 172.5,272.67 173.0,272.67 173.5,272.67 174.0,272.67 174.5,272.67 175.0,272.67 175.5,272.67 176.0,272.68 176.5,272.68 177.0,272.68 177.5,272.68 178.0,272.68 178.5,272.68 179.0,272.68 179.5,272.69 180.0,272.69 180.5,272.69 181.0,272.69 181.5,272.69 182.0,272.69 182.5,272.70 183.0,272.70 183.5,272.70 184.0,272.70 184.5,272.70 185.0,272.70 185.5,272.71 186.0,272.71 186.5,272.71 187.0,272.71 187.5,272.71 188.0,272.71 188.5,272.71 189.0,272.72 189.5,272.72 190.0,272.72 190.5,272.72 191.0,272.72 191.5,272.72 192.0,272.72 192.5,272.73 193.0,272.73 193.5,272.73 194.0,272.73 194.5,272.73 195.0,272.73 195.5,272.73 196.0,272.73 196.5,272.73 197.0,272.73 197.5,272.74 198.0,272.74 198.5,272.74 199.0,272.74 199.5,272.74 200.0,272.74 200.5,272.74 201.0,272.74 201.5,272.74 202.0,272.74 202.5,272.74 203.0,272.74 203.5,272.74 204.0,272.74 204.5,272.74 205.0,272.74 205.5,272.74 206.0,272.74 206.5,272.74 207.0,272.74 207.5,272.74 208.0,272.74 208.5,272.74 209.0,272.73 209.5,272.73 210.0,272.73 210.5,272.73 211.0,272.73 211.5,272.73 212.0,272.73 212.5,272.73 213.0,272.73 213.5,272.73 214.0,272.72 214.5,272.72 215.0,272.72 215.5,272.72 216.0,272.72 216.5,272.72 217.0,272.72 217.5,272.71 218.0,272.71 218.5,272.71 219.0,272.71 219.5,272.71 220.0,272.71 220.5,272.70 221.0,272.70 221.5,272.70 222.0,272.70 222.5,272.70 223.0,272.70 223.5,272.70 224.0,272.69 224.5,272.69 225.0,272.69 225.5,272.69 226.0,272.69 226.5,272.69 227.0,272.68 227.5,272.68 228.0,272.68 228.5,272.68 229.0,272.68 229.5,272.68 230.0,272.68 230.5,272.67 231.0,272.67 231.5,272.67 232.0,272.67 232.5,272.67 233.0,272.67 233.5,272.67 234.0,272.67 234.5,272.67 235.0,272.67 235.5,272.66 236.0,272.66 236.5,272.66 237.0,272.66 237.5,272.66 238.0,272.66 238.5,272.66 239.0,272.66 239.5,272.66 240.0,272.66 240.5,272.66 241.0,272.66 241.5,272.66 242.0,272.66 242.5,272.66 243.0,272.66 243.5,272.66 244.0,272.66 244.5,272.66 245.0,272.66 245.5,272.66 246.0,272.66 246.5,272.66 247.0,272.67 247.5,272.67 248.0,272.67 248.5,272.67 249.0,272.67 249.5,272.67 250.0,272.67 250.5,272.67 251.0,272.67 251.5,272.67 252.0,272.68 252.5,272.68 253.0,272.68 253.5,272.68 254.0,272.68 254.5,272.68 255.0,272.68 255.5,272.69 256.0,272.69 256.5,272.69 257.0,272.69 257.5,272.69 258.0,272.69 258.5,272.69 259.0,272.70 259.5,272.70 260.0,272.70 260.5,272.70 261.0,272.70 261.5,272.70 262.0,272.71 262.5,272.71 263.0,272.71 263.5,272.71 264.0,272.71 264.5,272.71 265.0,272.72 265.5,272.72 266.0,272.72 266.5,272.72 267.0,272.72 267.5,272.72 268.0,272.72 268.5,272.73 269.0,272.73 269.5,272.73 270.0,272.73 270.5,272.73 271.0,272.73 271.5,272.73 272.0,272.73 272.5,272.73 273.0,272.73 273.5,272.74 274.0,272.74 274.5,272.74 275.0,272.74 275.5,272.74 276.0,272.74 276.5,272.74 277.0,272.74 277.5,272.74 278.0,272.74 278.5,272.74 279.0,272.74 279.5,272.74 280.0,272.74 280.5,272.74 281.0,272.74 281.5,272.74 282.0,272.74 282.5,272.74 283.0,272.74 283.5,272.74 284.0,272.74 284.5,272.74 285.0,272.74 285.5,272.73 286.0,272.73 286.5,272.73 287.0,272.73 287.5,272.73 288.0,272.73 288.5,272.73 289.0,272.73 289.5,272.73 290.0,272.72 290.5,272.72 291.0,272.72 291.5,272.72 292.0,272.72 292.5,272.72 293.0,272.72 293.5,272.71 294.0,272.71 294.5,272.71 295.0,272.71 295.5,272.71 296.0,272.71 296.5,272.71 297.0,272.70 297.5,272.70 298.0,272.70 298.5,272.70 299.0,272.70 299.5,272.70 300.0,272.69 300.5,272.69 301.0,272.69 301.5,272.69 302.0,272.69 302.5,272.69 303.0,272.68 303.5,272.68 304.0,272.68 304.5,272.68 305.0,272.68 305.5,272.68 306.0,272.68 306.5,272.67 307.0,272.67 307.5,272.67 308.0,272.67 308.5,272.67 309.0,272.67 309.5,272.67 310.0,272.67 310.5,272.67 311.0,272.67 311.5,272.66 312.0,272.66 312.5,272.66 313.0,272.66 313.5,272.66 314.0,272.66 314.5,272.66 315.0,272.66 315.5,272.66 316.0,272.66 316.5,272.66 317.0,272.66 317.5,272.66 318.0,272.66 318.5,272.66 319.0,272.66 319.5,272.66 320.0,272.66 320.5,272.66 321.0,272.66 321.5,272.66 322.0,272.66 322.5,272.66 323.0,272.66 323.5,272.67 324.0,272.67 324.5,272.67 325.0,272.67 325.5,272.67 326.0,272.67 326.5,272.67 327.0,272.67 327.5,272.67 328.0,272.68 328.5,272.68 329.0,272.68 329.5,272.68 330.0,272.68 330.5,272.68 331.0,272.68 331.5,272.68 332.0,272.69 332.5,272.69 333.0,272.69 333.5,272.69 334.0,272.69 334.5,272.69 335.0,272.70 335.5,272.70 336.0,272.70 336.5,272.70 337.0,272.70 337.5,272.70 338.0,272.71 338.5,272.71 339.0,272.71 339.5,272.71 340.0,272.71 340.5,272.71 341.0,272.72 341.5,272.72 342.0,272.72 342.5,272.72 343.0,272.72 343.5,272.72 344.0,272.72 344.5,272.72 345.0,272.73 345.5,272.73 346.0,272.73 346.5,272.73 347.0,272.73 347.5,272.73 348.0,272.73 348.5,272.73 349.0,272.73 349.5,272.74 350.0,272.74 350.5,272.74 351.0,272.74 351.5,272.74 352.0,272.74 352.5,272.74 353.0,272.74 353.5,272.74 354.0,272.74 354.5,272.74 355.0,272.74 355.5,272.74 356.0,272.74 356.5,272.74 357.0,272.74 357.5,272.74 358.0,272.74 358.5,272.74 359.0,272.74 359.5,272.74 360.0,272.74 360.5,272.74 361.0,272.74 361.5,272.73 362.0,272.73 362.5,272.73 363.0,272.73 363.5,272.73 364.0,272.73 364.5,272.73 365.0,272.73 365.5,272.73 366.0,272.73 366.5,272.72 367.0,272.72 367.5,272.72 368.0,272.72 368.5,272.72 369.0,272.72 369.5,272.72 370.0,272.71 370.5,272.71 371.0,272.71 371.5,272.71 372.0,272.71 372.5,272.71 373.0,272.70 373.5,272.70 374.0,272.70 374.5,272.70 375.0,272.70 375.5,272.70 376.0,272.69 376.5,272.69 377.0,272.69 377.5,272.69 378.0,272.69 378.5,272.69 379.0,272.69 379.5,272.68 380.0,272.68 380.5,272.68 381.0,272.68 381.5,272.68 382.0,272.68 382.5,272.68 383.0,272.67 383.5,272.67 384.0,272.67 384.5,272.67 385.0,272.67 385.5,272.67 386.0,272.67 386.5,272.67 387.0,272.67 387.5,272.66 388.0,272.66 388.5,272.66 389.0,272.66 389.5,272.66 390.0,272.66 390.5,272.66 391.0,272.66 391.5,272.66 392.0,272.66 392.5,272.66 393.0,272.66 393.5,272.66 394.0,272.66 394.5,272.66 395.0,272.66 395.5,272.66 396.0,272.66 396.5,272.66 397.0,272.66 397.5,272.66 398.0,272.66 398.5,272.66 399.0,272.66 399.5,272.67 400.0,272.67 400.5,272.67 401.0,272.67 401.5,272.67 402.0,272.67 402.5,272.67 403.0,272.67 403.5,272.67 404.0,272.67 404.5,272.68 405.0,272.68 405.5,272.68 406.0,272.68 406.5,272.68 407.0,272.68 407.5,272.68 408.0,272.69 408.5,272.69 409.0,272.69 409.5,272.69 410.0,272.69 410.5,272.69 411.0,272.70 411.5,272.70 412.0,272.70 412.5,272.70 413.0,272.70 413.5,272.70 414.0,272.71 414.5,272.71 415.0,272.71 415.5,272.71 416.0,272.71 416.5,272.71 417.0,272.71 417.5,272.72 418.0,272.72 418.5,272.72 419.0,272.72 419.5,272.72 420.0,272.72 420.5,272.72 421.0,272.73 421.5,272.73 422.0,272.73 422.5,272.73 423.0,272.73 423.5,272.73 424.0,272.73 424.5,272.73 425.0,272.73 425.5,272.73 426.0,272.74 426.5,272.74 427.0,272.74 427.5,272.74 428.0,272.74 428.5,272.74 429.0,272.74 429.5,272.74 430.0,272.74 430.5,272.74 431.0,272.74 431.5,272.74 432.0,272.74 432.5,272.74 433.0,272.74 433.5,272.74 434.0,272.74 434.5,272.74 435.0,272.74 435.5,272.74 436.0,272.74 436.5,272.74 437.0,272.74 437.5,272.73 438.0,272.73 438.5,272.73 439.0,272.73 439.5,272.73 440.0,272.73 440.5,272.73 441.0,272.73 441.5,272.73 442.0,272.73 442.5,272.72 443.0,272.72 443.5,272.72 444.0,272.72 444.5,272.72 445.0,272.72 445.5,272.72 446.0,272.71 446.5,272.71 447.0,272.71 447.5,272.71 448.0,272.71 448.5,272.71 449.0,272.70 449.5,272.70 450.0,272.70 450.5,272.70 451.0,272.70 451.5,272.70 452.0,272.70 452.5,272.69 453.0,272.69 453.5,272.69 454.0,272.69 454.5,272.69 455.0,272.69 455.5,272.68 456.0,272.68 456.5,272.68 457.0,272.68 457.5,272.68 458.0,272.68 458.5,272.68 459.0,272.67 459.5,272.67 460.0,272.67 460.5,272.67 461.0,272.67 461.5,272.67 462.0,272.67 462.5,272.67 463.0,272.67 463.5,272.67 464.0,272.66 464.5,272.66 465.0,272.66 465.5,272.66 466.0,272.66 466.5,272.66 467.0,272.66 467.5,272.66 468.0,272.66 468.5,272.66 469.0,272.66 469.5,272.66 470.0,272.66 470.5,272.66 471.0,272.66 471.5,272.66 472.0,272.66 472.5,272.66 473.0,272.66 473.5,272.66 474.0,272.66 474.5,272.66 475.0,272.66 475.5,272.67 476.0,272.67 476.5,272.67 477.0,272.67 477.5,272.67 478.0,272.67 478.5,272.67 479.0,272.67 479.5,272.67 480.0,272.67 480.5,272.68 481.0,272.68 481.5,272.68 482.0,272.68 482.5,272.68 483.0,272.68 483.5,272.68 484.0,272.69 484.5,272.69 485.0,272.69 485.5,272.69 486.0,272.69 486.5,272.69 487.0,272.69 487.5,272.70 488.0,272.70 488.5,272.70 489.0,272.70 489.5,272.70 490.0,272.70 490.5,272.71 491.0,272.71 491.5,272.71 492.0,272.71 492.5,272.71 493.0,272.71 493.5,272.72 494.0,272.72 494.5,272.72 495.0,272.72 495.5,272.72 496.0,272.72 496.5,272.72 497.0,272.73 497.5,272.73 498.0,272.73 498.5,272.73 499.0,272.73 499.5,272.73 500.0,272.73 500.5,272.73 501.0,272.73 501.5,272.73 502.0,272.74 502.5,272.74 503.0,272.74 503.5,272.74 504.0,272.74 504.5,272.74 505.0,272.74 505.5,272.74 506.0,272.74 506.5,272.74 507.0,272.74 507.5,272.74 508.0,272.74 508.5,272.74 509.0,272.74 509.5,272.74 510.0,272.74 510.5,272.74 511.0,272.74 511.5,272.74 512.0,272.74 512.5,272.74 513.0,272.74 513.5,272.74 514.0,272.73 514.5,272.73 515.0,272.73 515.5,272.73 516.0,272.73 516.5,272.73 517.0,272.73 517.5,272.73 518.0,272.73 518.5,272.72 519.0,272.72 519.5,272.72 520.0,272.72 520.5,272.72 521.0,272.72 521.5,272.72 522.0,272.71 522.5,272.71 523.0,272.71 523.5,272.71 524.0,272.71 524.5,272.71 525.0,272.71 525.5,272.70 526.0,272.70 526.5,272.70 527.0,272.70 527.5,272.70 528.0,272.70 528.5,272.69 529.0,272.69 529.5,272.69 530.0,272.69 530.5,272.69 531.0,272.69 531.5,272.68 532.0,272.68 532.5,272.68 533.0,272.68 533.5,272.68 534.0,272.68 534.5,272.68 535.0,272.67 535.5,272.67 536.0,272.67 536.5,272.67 537.0,272.67 537.5,272.67 538.0,272.67 538.5,272.67 539.0,272.67 539.5,272.67 540.0,272.66 540.5,272.66 541.0,272.66 541.5,272.66 542.0,272.66 542.5,272.66 543.0,272.66 543.5,272.66 544.0,272.66 544.5,272.66 545.0,272.66 545.5,272.66 546.0,272.66" fill="none" stroke="#00ff00" stroke-width="2.2" stroke-linejoin="round"/>
</g>
<text transform="translate(53.76,159.55) scale(1.0876,1)" font-size="13.31" font-weight="normal" fill="#000" >30</text>
<text transform="translate(53.57,199.07) scale(1.1009,1)" font-size="13.31" font-weight="normal" fill="#000" >20</text>
<text transform="translate(53.15,238.59) scale(1.1298,1)" font-size="13.31" font-weight="normal" fill="#000" >10</text>
<text transform="translate(61.84,278.11) scale(1.0829,1)" font-size="13.31" font-weight="normal" fill="#000" >0</text>
<text transform="translate(52.95,317.63) scale(1.1536,1)" font-size="13.31" font-weight="normal" fill="#000" >−10</text>
<text transform="translate(52.95,357.15) scale(1.1536,1)" font-size="13.31" font-weight="normal" fill="#000" >−20</text>
<text transform="translate(52.95,396.67) scale(1.1536,1)" font-size="13.31" font-weight="normal" fill="#000" >−30</text>
<rect x="89" y="394" width="1" height="4" fill="#111" />
<text transform="translate(86.36,410.90) scale(0.8200,1)" font-size="12.90" font-weight="normal" fill="#000" >0</text>
<rect x="135" y="394" width="1" height="4" fill="#111" />
<text transform="translate(123.96,410.90) scale(0.8200,1)" font-size="12.90" font-weight="normal" fill="#000" >0.01</text>
<rect x="181" y="394" width="1" height="4" fill="#111" />
<text transform="translate(169.67,410.90) scale(0.8200,1)" font-size="12.90" font-weight="normal" fill="#000" >0.02</text>
<rect x="226" y="394" width="1" height="4" fill="#111" />
<text transform="translate(215.33,410.90) scale(0.8200,1)" font-size="12.90" font-weight="normal" fill="#000" >0.03</text>
<rect x="272" y="394" width="1" height="4" fill="#111" />
<text transform="translate(260.95,410.90) scale(0.8200,1)" font-size="12.90" font-weight="normal" fill="#000" >0.04</text>
<rect x="318" y="394" width="1" height="4" fill="#111" />
<text transform="translate(306.73,410.90) scale(0.8200,1)" font-size="12.90" font-weight="normal" fill="#000" >0.05</text>
<rect x="364" y="394" width="1" height="4" fill="#111" />
<text transform="translate(352.43,410.90) scale(0.8200,1)" font-size="12.90" font-weight="normal" fill="#000" >0.06</text>
<rect x="409" y="394" width="1" height="4" fill="#111" />
<text transform="translate(398.17,410.90) scale(0.8200,1)" font-size="12.90" font-weight="normal" fill="#000" >0.07</text>
<rect x="455" y="394" width="1" height="4" fill="#111" />
<text transform="translate(443.83,410.90) scale(0.8200,1)" font-size="12.90" font-weight="normal" fill="#000" >0.08</text>
<rect x="501" y="394" width="1" height="4" fill="#111" />
<text transform="translate(489.55,410.90) scale(0.8200,1)" font-size="12.90" font-weight="normal" fill="#000" >0.09</text>
<rect x="546" y="394" width="1" height="4" fill="#111" />
<text transform="translate(537.21,410.90) scale(0.8200,1)" font-size="12.90" font-weight="normal" fill="#000" >0.1</text>
<rect x="18" y="424" width="540" height="1" fill="#e6e6e6" />
<rect x="18" y="424" width="1" height="253" fill="#e6e6e6" />
<rect x="18" y="676" width="540" height="1" fill="#5c5c5c" />
<rect x="557" y="424" width="1" height="253" fill="#5c5c5c" />
<rect x="89" y="433" width="458" height="223" fill="#000" />
<rect x="88" y="432" width="460" height="1" fill="#7a7a7a" />
<rect x="88" y="432" width="1" height="225" fill="#7a7a7a" />
<rect x="88" y="656" width="461" height="1" fill="#d8d8d8" />
<rect x="547" y="432" width="1" height="225" fill="#d8d8d8" />
<g clip-path="url(#iplot)">
<polyline points="89.0,592.30 89.5,591.60 90.0,590.16 90.5,590.22 91.0,589.70 91.5,588.39 92.0,587.73 92.5,585.87 93.0,585.98 93.5,583.57 94.0,583.73 94.5,581.22 95.0,580.23 95.5,579.51 96.0,577.67 96.5,576.44 97.0,574.92 97.5,573.38 98.0,571.48 98.5,568.84 99.0,567.07 99.5,565.38 100.0,564.77 100.5,562.62 101.0,559.83 101.5,559.14 102.0,556.20 102.5,554.87 103.0,551.86 103.5,551.28 104.0,548.09 104.5,546.76 105.0,545.03 105.5,543.20 106.0,539.95 106.5,538.38 107.0,536.87 107.5,534.50 108.0,531.82 108.5,530.88 109.0,528.42 109.5,527.15 110.0,525.20 110.5,522.48 111.0,520.75 111.5,519.74 112.0,518.18 112.5,516.47 113.0,514.06 113.5,512.64 114.0,511.43 114.5,510.05 115.0,508.03 115.5,506.52 116.0,505.07 116.5,504.18 117.0,503.58 117.5,502.68 118.0,500.67 118.5,500.20 119.0,498.86 119.5,499.05 120.0,497.20 120.5,497.26 121.0,495.95 121.5,495.43 122.0,495.58 122.5,495.97 123.0,494.41 123.5,494.90 124.0,494.24 124.5,495.15 125.0,495.37 125.5,494.60 126.0,495.55 126.5,496.20 127.0,496.32 127.5,496.50 128.0,497.97 128.5,497.88 129.0,498.74 129.5,499.46 130.0,500.95 130.5,501.04 131.0,501.94 131.5,502.99 132.0,504.98 132.5,505.66 133.0,507.47 133.5,508.31 134.0,510.77 134.5,511.07 135.0,512.50 135.5,514.79 136.0,516.42 136.5,518.10 137.0,519.84 137.5,522.39 138.0,522.82 138.5,525.78 139.0,527.74 139.5,529.78 140.0,531.51 140.5,532.64 141.0,535.79 141.5,537.70 142.0,538.82 142.5,541.59 143.0,543.88 143.5,545.05 144.0,547.11 144.5,549.21 145.0,550.96 145.5,553.85 146.0,554.70 146.5,556.89 147.0,559.83 147.5,561.63 148.0,562.97 148.5,564.82 149.0,566.96 149.5,568.98 150.0,570.30 150.5,572.39 151.0,573.37 151.5,574.57 152.0,577.17 152.5,578.03 153.0,579.21 153.5,581.44 154.0,581.77 154.5,582.85 155.0,584.84 155.5,585.90 156.0,586.32 156.5,587.74 157.0,588.83 157.5,588.83 158.0,589.81 158.5,591.12 159.0,591.84 159.5,592.20 160.0,592.46 160.5,591.99 161.0,592.50 161.5,592.51 162.0,592.73 162.5,592.68 163.0,593.78 163.5,592.92 164.0,592.02 164.5,591.72 165.0,592.32 165.5,591.56 166.0,590.67 166.5,590.41 167.0,589.43 167.5,589.30 168.0,587.87 168.5,586.80 169.0,586.48 169.5,585.19 170.0,582.79 170.5,581.83 171.0,580.28 171.5,579.36 172.0,577.67 172.5,576.06 173.0,574.52 173.5,574.18 174.0,571.63 174.5,570.49 175.0,568.13 175.5,566.95 176.0,564.73 176.5,562.31 177.0,560.87 177.5,559.50 178.0,557.16 178.5,555.32 179.0,552.57 179.5,551.55 180.0,549.51 180.5,546.98 181.0,545.73 181.5,543.00 182.0,540.44 182.5,539.07 183.0,537.42 183.5,535.12 184.0,533.03 184.5,531.64 185.0,529.72 185.5,527.79 186.0,525.66 186.5,523.63 187.0,521.98 187.5,520.25 188.0,518.74 188.5,516.35 189.0,514.26 189.5,512.99 190.0,511.50 190.5,509.88 191.0,509.10 191.5,506.97 192.0,506.02 192.5,504.63 193.0,503.35 193.5,502.44 194.0,501.63 194.5,500.75 195.0,499.88 195.5,498.63 196.0,498.07 196.5,497.10 197.0,497.36 197.5,496.34 198.0,495.16 198.5,495.74 199.0,495.00 199.5,494.92 200.0,495.13 200.5,494.07 201.0,495.17 201.5,494.62 202.0,495.76 202.5,496.22 203.0,495.43 203.5,496.55 204.0,497.68 204.5,497.84 205.0,498.49 205.5,498.85 206.0,500.65 206.5,501.43 207.0,501.37 207.5,502.80 208.0,504.83 208.5,505.79 209.0,507.07 209.5,507.95 210.0,509.46 210.5,510.60 211.0,512.18 211.5,514.22 212.0,515.53 212.5,517.21 213.0,518.92 213.5,521.12 214.0,522.48 214.5,524.44 215.0,526.02 215.5,529.10 216.0,529.94 216.5,533.18 217.0,534.04 217.5,536.30 218.0,538.45 218.5,539.78 219.0,542.38 219.5,544.64 220.0,546.13 220.5,548.02 221.0,550.43 221.5,552.77 222.0,554.66 222.5,556.62 223.0,558.18 223.5,560.74 224.0,562.50 224.5,564.12 225.0,566.21 225.5,568.09 226.0,569.16 226.5,570.78 227.0,572.96 227.5,574.66 228.0,576.61 228.5,577.94 229.0,579.63 229.5,580.38 230.0,581.70 230.5,583.70 231.0,583.67 231.5,585.68 232.0,585.97 232.5,586.97 233.0,587.70 233.5,589.66 234.0,590.09 234.5,590.06 235.0,592.00 235.5,592.47 236.0,592.14 236.5,592.60 237.0,592.25 237.5,592.67 238.0,593.12 238.5,592.47 239.0,593.13 239.5,592.99 240.0,592.52 240.5,592.65 241.0,592.30 241.5,591.48 242.0,591.29 242.5,589.78 243.0,589.47 243.5,588.90 244.0,588.67 244.5,587.32 245.0,586.27 245.5,584.95 246.0,583.77 246.5,582.10 247.0,580.69 247.5,580.04 248.0,578.70 248.5,576.95 249.0,574.87 249.5,574.26 250.0,572.35 250.5,570.24 251.0,569.47 251.5,567.48 252.0,564.70 252.5,563.08 253.0,561.66 253.5,560.35 254.0,557.25 254.5,555.60 255.0,553.42 255.5,551.18 256.0,549.32 256.5,547.99 257.0,546.36 257.5,544.13 258.0,541.77 258.5,539.76 259.0,538.21 259.5,536.21 260.0,533.55 260.5,531.62 261.0,530.03 261.5,527.15 262.0,525.78 262.5,524.78 263.0,522.40 263.5,520.04 264.0,518.99 264.5,516.70 265.0,516.05 265.5,513.98 266.0,511.61 266.5,510.47 267.0,508.89 267.5,508.18 268.0,506.39 268.5,505.04 269.0,504.25 269.5,502.54 270.0,501.64 270.5,499.95 271.0,499.65 271.5,499.04 272.0,498.70 272.5,497.95 273.0,496.44 273.5,496.87 274.0,496.42 274.5,495.94 275.0,495.13 275.5,494.48 276.0,494.66 276.5,494.34 277.0,495.48 277.5,495.68 278.0,494.77 278.5,495.72 279.0,495.52 279.5,496.51 280.0,497.32 280.5,497.79 281.0,498.74 281.5,498.32 282.0,499.65 282.5,500.93 283.0,501.78 283.5,502.94 284.0,504.58 284.5,504.55 285.0,506.29 285.5,507.07 286.0,509.24 286.5,510.44 287.0,512.50 287.5,514.38 288.0,514.69 288.5,516.48 289.0,519.00 289.5,519.90 290.0,521.82 290.5,524.42 291.0,525.85 291.5,527.23 292.0,529.84 292.5,531.13 293.0,534.15 293.5,535.93 294.0,537.45 294.5,540.20 295.0,542.10 295.5,543.29 296.0,545.90 296.5,547.47 297.0,550.30 297.5,552.41 298.0,554.13 298.5,556.37 299.0,557.16 299.5,560.11 300.0,561.61 300.5,564.15 301.0,565.38 301.5,567.41 302.0,569.15 302.5,571.37 303.0,572.97 303.5,573.56 304.0,575.85 304.5,577.53 305.0,579.08 305.5,580.36 306.0,581.78 306.5,583.36 307.0,583.66 307.5,585.29 308.0,586.65 308.5,586.84 309.0,588.69 309.5,589.29 310.0,589.24 310.5,591.00 311.0,591.16 311.5,591.13 312.0,591.65 312.5,592.99 313.0,593.01 313.5,592.69 314.0,593.34 314.5,592.53 315.0,593.61 315.5,592.40 316.0,592.87 316.5,593.00 317.0,592.30 317.5,592.34 318.0,590.96 318.5,591.01 319.0,589.38 319.5,589.08 320.0,588.57 320.5,587.83 321.0,586.31 321.5,585.83 322.0,583.73 322.5,583.63 323.0,581.79 323.5,580.42 324.0,579.43 324.5,577.23 325.0,576.29 325.5,574.33 326.0,572.84 326.5,571.56 327.0,569.73 327.5,568.42 328.0,566.49 328.5,563.66 329.0,562.58 329.5,560.17 330.0,559.06 330.5,556.44 331.0,554.77 331.5,552.57 332.0,550.87 332.5,549.19 333.0,546.80 333.5,544.90 334.0,543.02 334.5,540.12 335.0,538.74 335.5,536.55 336.0,533.80 336.5,532.02 337.0,529.90 337.5,527.99 338.0,527.16 338.5,525.06 339.0,523.57 339.5,520.80 340.0,519.04 340.5,517.77 341.0,515.99 341.5,513.99 342.0,512.34 342.5,511.47 343.0,509.10 343.5,508.41 344.0,506.64 344.5,506.00 345.0,504.87 345.5,502.52 346.0,501.69 346.5,500.70 347.0,500.74 347.5,499.87 348.0,498.89 348.5,498.11 349.0,497.31 349.5,496.63 350.0,496.66 350.5,495.85 351.0,495.05 351.5,495.49 352.0,494.36 352.5,494.69 353.0,494.49 353.5,495.27 354.0,495.19 354.5,495.08 355.0,495.92 355.5,496.87 356.0,496.15 356.5,496.82 357.0,498.22 357.5,499.33 358.0,498.96 358.5,500.23 359.0,502.03 359.5,502.79 360.0,504.11 360.5,504.29 361.0,506.40 361.5,506.68 362.0,508.31 362.5,510.73 363.0,511.33 363.5,513.33 364.0,514.42 364.5,515.96 365.0,518.47 365.5,520.50 366.0,521.02 366.5,523.63 367.0,524.74 367.5,526.99 368.0,528.84 368.5,530.65 369.0,532.92 369.5,535.17 370.0,537.76 370.5,538.82 371.0,541.24 371.5,543.15 372.0,544.56 372.5,547.77 373.0,548.86 373.5,551.93 374.0,552.96 374.5,554.79 375.0,557.56 375.5,559.09 376.0,560.38 376.5,562.76 377.0,564.75 377.5,567.01 378.0,569.07 378.5,570.37 379.0,571.99 379.5,573.95 380.0,575.39 380.5,577.19 381.0,577.84 381.5,579.32 382.0,581.33 382.5,582.64 383.0,583.48 383.5,584.76 384.0,585.14 384.5,587.04 385.0,588.08 385.5,588.10 386.0,590.02 386.5,590.13 387.0,591.12 387.5,590.99 388.0,591.88 388.5,591.98 389.0,593.19 389.5,592.70 390.0,592.97 390.5,593.26 391.0,592.81 391.5,592.62 392.0,593.52 392.5,593.01 393.0,592.57 393.5,592.38 394.0,592.10 394.5,591.19 395.0,590.66 395.5,589.18 396.0,588.74 396.5,588.34 397.0,587.07 397.5,585.82 398.0,584.86 398.5,583.97 399.0,582.87 399.5,581.65 400.0,578.83 400.5,577.75 401.0,577.25 401.5,574.76 402.0,572.78 402.5,571.74 403.0,570.72 403.5,568.42 404.0,566.71 404.5,565.25 405.0,562.87 405.5,561.78 406.0,558.51 406.5,556.97 407.0,555.03 407.5,552.59 408.0,551.01 408.5,549.59 409.0,547.58 409.5,545.71 410.0,543.84 410.5,540.71 411.0,538.59 411.5,537.38 412.0,535.54 412.5,532.88 413.0,530.60 413.5,528.54 414.0,527.74 414.5,524.93 415.0,523.00 415.5,521.30 416.0,520.13 416.5,518.59 417.0,515.94 417.5,515.03 418.0,513.35 418.5,511.53 419.0,510.30 419.5,508.17 420.0,507.66 420.5,506.64 421.0,504.61 421.5,503.33 422.0,501.92 422.5,501.04 423.0,499.77 423.5,498.81 424.0,498.65 424.5,497.90 425.0,497.73 425.5,496.93 426.0,496.01 426.5,496.32 427.0,495.07 427.5,495.58 428.0,494.99 428.5,494.11 429.0,495.40 429.5,495.55 430.0,495.11 430.5,495.71 431.0,495.25 431.5,496.71 432.0,495.96 432.5,496.50 433.0,497.25 433.5,498.51 434.0,499.52 434.5,499.84 435.0,501.01 435.5,502.17 436.0,503.39 436.5,504.41 437.0,505.30 437.5,506.37 438.0,507.61 438.5,510.13 439.0,511.42 439.5,512.74 440.0,514.15 440.5,516.11 441.0,518.02 441.5,519.92 442.0,521.35 442.5,522.96 443.0,524.05 443.5,526.03 444.0,528.01 444.5,529.79 445.0,531.77 445.5,534.26 446.0,535.97 446.5,539.09 447.0,540.20 447.5,542.33 448.0,544.82 448.5,546.44 449.0,547.90 449.5,550.62 450.0,552.38 450.5,554.88 451.0,556.79 451.5,557.94 452.0,561.13 452.5,562.79 453.0,563.94 453.5,566.11 454.0,568.44 454.5,569.35 455.0,571.49 455.5,572.84 456.0,574.70 456.5,576.10 457.0,577.56 457.5,579.26 458.0,581.07 458.5,582.30 459.0,582.51 459.5,584.22 460.0,586.00 460.5,585.95 461.0,587.83 461.5,588.98 462.0,589.18 462.5,590.35 463.0,590.68 463.5,591.19 464.0,592.20 464.5,592.13 465.0,593.17 465.5,592.86 466.0,592.94 466.5,593.80 467.0,593.34 467.5,593.78 468.0,593.10 468.5,592.25 469.0,592.41 469.5,591.78 470.0,591.24 470.5,591.64 471.0,589.71 471.5,589.40 472.0,589.53 472.5,587.59 473.0,587.30 473.5,586.61 474.0,584.36 474.5,583.79 475.0,582.25 475.5,581.91 476.0,579.61 476.5,579.26 477.0,577.53 477.5,575.80 478.0,574.74 478.5,572.25 479.0,571.14 479.5,569.28 480.0,566.91 480.5,565.52 481.0,562.99 481.5,561.50 482.0,559.22 482.5,557.74 483.0,555.26 483.5,553.35 484.0,552.39 484.5,549.53 485.0,548.11 485.5,545.46 486.0,543.55 486.5,541.31 487.0,540.32 487.5,537.93 488.0,535.39 488.5,533.08 489.0,531.44 489.5,530.49 490.0,527.73 490.5,526.57 491.0,524.03 491.5,521.82 492.0,521.04 492.5,518.07 493.0,516.73 493.5,515.68 494.0,514.14 494.5,512.19 495.0,510.10 495.5,509.01 496.0,508.30 496.5,507.10 497.0,505.69 497.5,503.46 498.0,503.23 498.5,501.61 499.0,501.00 499.5,499.49 500.0,499.09 500.5,498.66 501.0,496.89 501.5,496.77 502.0,496.01 502.5,495.37 503.0,494.79 503.5,495.88 504.0,495.19 504.5,495.35 505.0,494.79 505.5,494.28 506.0,494.51 506.5,495.86 507.0,495.93 507.5,495.36 508.0,496.03 508.5,496.99 509.0,497.48 509.5,498.65 510.0,498.41 510.5,499.93 511.0,500.15 511.5,501.54 512.0,503.40 512.5,504.17 513.0,505.55 513.5,505.82 514.0,507.62 514.5,509.83 515.0,511.10 515.5,512.34 516.0,513.75 516.5,515.22 517.0,517.17 517.5,518.94 518.0,521.22 518.5,522.17 519.0,524.38 519.5,526.71 520.0,527.97 520.5,529.12 521.0,532.47 521.5,534.29 522.0,535.51 522.5,538.11 523.0,540.12 523.5,541.81 524.0,544.20 524.5,545.77 525.0,547.86 525.5,549.24 526.0,551.20 526.5,554.61 527.0,555.81 527.5,557.46 528.0,559.25 528.5,561.30 529.0,563.39 529.5,565.23 530.0,567.44 530.5,569.33 531.0,570.29 531.5,571.86 532.0,573.40 532.5,575.36 533.0,577.44 533.5,578.24 534.0,579.68 534.5,581.38 535.0,582.48 535.5,584.12 536.0,584.98 536.5,586.28 537.0,587.80 537.5,588.33 538.0,589.21 538.5,589.02 539.0,590.48 539.5,591.28 540.0,592.01 540.5,592.49 541.0,592.71 541.5,593.33 542.0,593.74 542.5,592.60 543.0,593.28 543.5,593.26 544.0,592.97 544.5,593.17 545.0,593.08 545.5,592.87 546.0,592.08" fill="none" stroke="#ffffff" stroke-width="1.3" stroke-linejoin="round"/>
<polyline points="89.0,510.22 89.5,508.11 90.0,506.93 90.5,504.98 91.0,504.55 91.5,502.45 92.0,501.78 92.5,501.42 93.0,500.25 93.5,498.70 94.0,497.23 94.5,497.36 95.0,496.03 95.5,495.90 96.0,494.70 96.5,495.41 97.0,494.41 97.5,493.49 98.0,494.19 98.5,494.09 99.0,494.39 99.5,494.21 100.0,494.18 100.5,493.75 101.0,494.76 101.5,494.87 102.0,495.63 102.5,495.58 103.0,495.82 103.5,496.85 104.0,498.30 104.5,498.37 105.0,498.98 105.5,500.53 106.0,502.40 106.5,502.48 107.0,503.62 107.5,505.71 108.0,507.38 108.5,508.74 109.0,509.71 109.5,510.76 110.0,512.71 110.5,513.95 111.0,516.71 111.5,518.30 112.0,519.47 112.5,521.46 113.0,523.70 113.5,525.21 114.0,527.66 114.5,530.05 115.0,531.52 115.5,534.08 116.0,535.26 116.5,537.74 117.0,539.57 117.5,541.49 118.0,544.07 118.5,545.84 119.0,548.58 119.5,549.29 120.0,551.88 120.5,553.30 121.0,556.70 121.5,557.88 122.0,559.70 122.5,562.23 123.0,564.51 123.5,566.30 124.0,568.17 124.5,569.06 125.0,571.83 125.5,572.48 126.0,574.73 126.5,576.18 127.0,577.67 127.5,579.23 128.0,580.53 128.5,582.00 129.0,583.72 129.5,584.36 130.0,586.26 130.5,586.71 131.0,587.67 131.5,588.61 132.0,590.19 132.5,590.32 133.0,590.75 133.5,592.17 134.0,593.00 134.5,593.12 135.0,592.91 135.5,594.42 136.0,594.84 136.5,594.29 137.0,594.09 137.5,593.89 138.0,594.39 138.5,593.27 139.0,594.11 139.5,592.97 140.0,593.51 140.5,593.07 141.0,592.30 141.5,591.71 142.0,590.28 142.5,589.35 143.0,588.97 143.5,586.84 144.0,586.61 144.5,585.78 145.0,584.51 145.5,582.39 146.0,580.77 146.5,580.47 147.0,579.18 147.5,576.54 148.0,575.73 148.5,572.99 149.0,572.00 149.5,570.05 150.0,568.69 150.5,566.18 151.0,564.81 151.5,563.11 152.0,560.31 152.5,559.52 153.0,556.60 153.5,555.57 154.0,552.68 154.5,550.99 155.0,548.24 155.5,547.36 156.0,544.54 156.5,542.70 157.0,539.87 157.5,537.76 158.0,536.18 158.5,534.73 159.0,532.66 159.5,530.64 160.0,528.40 160.5,526.74 161.0,524.85 161.5,522.14 162.0,520.45 162.5,519.14 163.0,516.34 163.5,515.76 164.0,513.55 164.5,512.54 165.0,509.91 165.5,508.39 166.0,507.82 166.5,505.71 167.0,504.27 167.5,503.80 168.0,502.54 168.5,501.18 169.0,499.53 169.5,499.63 170.0,497.96 170.5,497.26 171.0,496.73 171.5,495.88 172.0,494.85 172.5,495.35 173.0,493.94 173.5,494.38 174.0,493.51 174.5,493.22 175.0,494.16 175.5,493.16 176.0,493.06 176.5,494.27 177.0,494.94 177.5,495.16 178.0,494.32 178.5,496.26 179.0,495.53 179.5,497.34 180.0,497.23 180.5,499.02 181.0,499.83 181.5,500.06 182.0,502.01 182.5,502.78 183.0,503.13 183.5,504.71 184.0,505.81 184.5,507.08 185.0,509.95 185.5,511.18 186.0,511.95 186.5,513.74 187.0,516.40 187.5,517.45 188.0,519.63 188.5,521.17 189.0,523.52 189.5,525.54 190.0,526.04 190.5,529.00 191.0,530.16 191.5,533.30 192.0,534.79 192.5,537.35 193.0,538.98 193.5,541.42 194.0,542.74 194.5,545.61 195.0,546.81 195.5,549.23 196.0,551.87 196.5,553.56 197.0,555.38 197.5,556.76 198.0,559.59 198.5,561.76 199.0,562.57 199.5,564.60 200.0,566.69 200.5,569.19 201.0,571.12 201.5,572.73 202.0,574.70 202.5,576.38 203.0,577.28 203.5,578.95 204.0,580.20 204.5,581.90 205.0,583.76 205.5,584.03 206.0,585.29 206.5,586.59 207.0,587.65 207.5,588.43 208.0,588.91 208.5,589.91 209.0,590.90 209.5,592.04 210.0,592.76 210.5,593.12 211.0,592.73 211.5,593.95 212.0,594.21 212.5,594.35 213.0,594.83 213.5,593.57 214.0,594.96 214.5,593.91 215.0,593.18 215.5,593.84 216.0,592.89 216.5,592.74 217.0,592.35 217.5,591.75 218.0,591.12 218.5,589.22 219.0,588.40 219.5,587.23 220.0,587.45 220.5,585.36 221.0,584.71 221.5,582.97 222.0,581.78 222.5,580.72 223.0,578.29 223.5,578.21 224.0,575.52 224.5,573.73 225.0,572.56 225.5,570.70 226.0,568.33 226.5,567.64 227.0,565.19 227.5,563.13 228.0,561.74 228.5,559.28 229.0,557.77 229.5,555.56 230.0,553.41 230.5,551.27 231.0,549.73 231.5,547.21 232.0,545.27 232.5,543.66 233.0,541.01 233.5,539.46 234.0,536.44 234.5,535.04 235.0,532.64 235.5,530.92 236.0,528.99 236.5,527.40 237.0,525.58 237.5,522.51 238.0,521.23 238.5,519.41 239.0,517.61 239.5,515.45 240.0,514.60 240.5,513.05 241.0,510.49 241.5,509.49 242.0,507.75 242.5,506.05 243.0,504.60 243.5,503.35 244.0,503.35 244.5,501.70 245.0,499.96 245.5,498.98 246.0,499.08 246.5,498.19 247.0,497.27 247.5,496.80 248.0,495.81 248.5,494.63 249.0,494.60 249.5,494.34 250.0,494.61 250.5,493.96 251.0,492.97 251.5,493.39 252.0,493.82 252.5,493.93 253.0,493.70 253.5,494.08 254.0,495.39 254.5,495.09 255.0,496.13 255.5,496.55 256.0,497.71 256.5,498.32 257.0,499.26 257.5,500.17 258.0,501.75 258.5,502.60 259.0,503.24 259.5,505.25 260.0,506.40 260.5,506.99 261.0,509.10 261.5,510.54 262.0,512.23 262.5,512.97 263.0,515.75 263.5,516.67 264.0,518.11 264.5,520.89 265.0,522.42 265.5,523.76 266.0,525.95 266.5,528.26 267.0,530.73 267.5,532.15 268.0,534.28 268.5,535.82 269.0,538.49 269.5,540.39 270.0,542.11 270.5,543.94 271.0,546.69 271.5,548.71 272.0,550.49 272.5,552.03 273.0,555.15 273.5,556.02 274.0,558.40 274.5,560.87 275.0,562.38 275.5,564.79 276.0,567.05 276.5,567.87 277.0,570.23 277.5,571.77 278.0,573.51 278.5,574.57 279.0,576.39 279.5,579.02 280.0,579.67 280.5,581.29 281.0,582.65 281.5,583.39 282.0,585.25 282.5,586.32 283.0,586.80 283.5,588.48 284.0,589.34 284.5,590.17 285.0,590.49 285.5,591.43 286.0,591.95 286.5,592.99 287.0,593.98 287.5,593.41 288.0,593.88 288.5,593.77 289.0,593.89 289.5,594.88 290.0,594.68 290.5,594.76 291.0,593.44 291.5,594.19 292.0,593.82 292.5,592.36 293.0,592.08 293.5,592.19 294.0,590.54 294.5,589.70 295.0,589.15 295.5,588.83 296.0,586.86 296.5,586.16 297.0,584.74 297.5,582.88 298.0,581.83 298.5,580.37 299.0,580.01 299.5,578.23 300.0,576.39 300.5,575.54 301.0,572.42 301.5,571.76 302.0,570.01 302.5,568.13 303.0,566.37 303.5,563.59 304.0,562.12 304.5,560.24 305.0,558.39 305.5,556.94 306.0,554.54 306.5,551.67 307.0,549.71 307.5,547.56 308.0,546.38 308.5,544.39 309.0,542.53 309.5,539.75 310.0,537.92 310.5,535.74 311.0,533.66 311.5,531.50 312.0,529.82 312.5,527.20 313.0,526.14 313.5,523.16 314.0,521.81 314.5,520.71 315.0,518.52 315.5,516.44 316.0,514.91 316.5,513.01 317.0,511.76 317.5,510.27 318.0,508.00 318.5,507.31 319.0,505.32 319.5,503.87 320.0,502.94 320.5,501.97 321.0,500.16 321.5,499.86 322.0,498.26 322.5,498.60 323.0,497.25 323.5,496.23 324.0,496.46 324.5,494.71 325.0,495.40 325.5,494.24 326.0,494.55 326.5,493.24 327.0,493.64 327.5,493.24 328.0,493.72 328.5,493.58 329.0,493.79 329.5,494.65 330.0,495.15 330.5,494.68 331.0,496.25 331.5,495.74 332.0,497.50 332.5,498.44 333.0,499.32 333.5,499.24 334.0,500.01 334.5,501.90 335.0,502.70 335.5,504.53 336.0,504.87 336.5,506.57 337.0,508.78 337.5,510.42 338.0,511.03 338.5,513.60 339.0,514.08 339.5,516.59 340.0,518.44 340.5,519.72 341.0,521.95 341.5,523.47 342.0,525.99 342.5,526.81 343.0,529.65 343.5,530.89 344.0,533.93 344.5,535.00 345.0,536.79 345.5,539.72 346.0,542.32 346.5,543.89 347.0,545.58 347.5,548.26 348.0,549.85 348.5,552.58 349.0,554.07 349.5,555.71 350.0,558.15 350.5,559.76 351.0,562.55 351.5,563.42 352.0,566.35 352.5,567.02 353.0,568.72 353.5,570.57 354.0,572.91 354.5,574.93 355.0,576.46 355.5,577.43 356.0,579.32 356.5,580.13 357.0,582.75 357.5,583.49 358.0,584.18 358.5,585.76 359.0,586.96 359.5,588.67 360.0,589.56 360.5,590.25 361.0,590.14 361.5,590.94 362.0,592.51 362.5,592.04 363.0,593.85 363.5,593.41 364.0,593.18 364.5,594.34 365.0,593.60 365.5,594.09 366.0,594.96 366.5,594.43 367.0,594.07 367.5,594.08 368.0,592.99 368.5,593.37 369.0,591.94 369.5,592.05 370.0,591.70 370.5,590.20 371.0,590.03 371.5,588.42 372.0,587.07 372.5,586.27 373.0,585.32 373.5,584.73 374.0,582.73 374.5,581.99 375.0,579.75 375.5,579.03 376.0,576.83 376.5,575.57 377.0,573.89 377.5,571.76 378.0,570.75 378.5,568.95 379.0,565.97 379.5,565.00 380.0,562.34 380.5,560.35 381.0,558.97 381.5,557.46 382.0,555.53 382.5,552.33 383.0,551.41 383.5,548.79 384.0,546.66 384.5,545.20 385.0,542.61 385.5,540.99 386.0,538.37 386.5,536.36 387.0,534.52 387.5,532.74 388.0,530.43 388.5,528.74 389.0,526.89 389.5,524.80 390.0,521.97 390.5,520.66 391.0,518.26 391.5,517.79 392.0,514.68 392.5,513.67 393.0,511.60 393.5,510.35 394.0,508.65 394.5,507.88 395.0,505.71 395.5,505.26 396.0,503.83 396.5,502.98 397.0,501.32 397.5,500.08 398.0,499.44 398.5,497.65 399.0,498.02 399.5,496.55 400.0,496.39 400.5,495.28 401.0,494.50 401.5,494.19 402.0,494.82 402.5,494.30 403.0,493.62 403.5,492.97 404.0,494.37 404.5,493.62 405.0,493.69 405.5,493.77 406.0,494.82 406.5,494.56 407.0,495.59 407.5,495.52 408.0,497.54 408.5,496.93 409.0,498.55 409.5,499.48 410.0,500.94 410.5,501.78 411.0,502.20 411.5,503.49 412.0,505.55 412.5,506.61 413.0,508.32 413.5,509.71 414.0,511.21 414.5,512.63 415.0,513.32 415.5,514.98 416.0,517.02 416.5,519.27 417.0,521.07 417.5,522.52 418.0,524.23 418.5,526.40 419.0,528.53 419.5,531.17 420.0,532.55 420.5,534.26 421.0,536.39 421.5,539.48 422.0,540.62 422.5,543.24 423.0,545.59 423.5,546.48 424.0,548.98 424.5,550.93 425.0,553.88 425.5,554.88 426.0,556.74 426.5,558.77 427.0,560.97 427.5,562.77 428.0,564.72 428.5,566.90 429.0,568.95 429.5,570.16 430.0,571.96 430.5,573.52 431.0,576.00 431.5,576.61 432.0,578.77 432.5,579.63 433.0,582.26 433.5,582.34 434.0,583.89 434.5,585.89 435.0,586.15 435.5,588.12 436.0,589.16 436.5,589.69 437.0,590.85 437.5,591.23 438.0,591.29 438.5,592.22 439.0,592.69 439.5,593.59 440.0,593.36 440.5,593.61 441.0,593.95 441.5,593.65 442.0,593.83 442.5,594.37 443.0,594.68 443.5,593.59 444.0,592.98 444.5,593.29 445.0,592.41 445.5,591.47 446.0,590.87 446.5,591.28 447.0,589.74 447.5,589.53 448.0,588.41 448.5,586.32 449.0,585.77 449.5,584.30 450.0,583.25 450.5,582.09 451.0,580.87 451.5,579.20 452.0,576.96 452.5,575.71 453.0,574.56 453.5,573.18 454.0,571.18 454.5,568.77 455.0,567.33 455.5,565.14 456.0,563.03 456.5,562.12 457.0,559.33 457.5,558.29 458.0,555.12 458.5,554.04 459.0,551.87 459.5,548.79 460.0,547.61 460.5,545.74 461.0,542.68 461.5,541.02 462.0,538.53 462.5,537.21 463.0,535.00 463.5,532.29 464.0,530.94 464.5,528.24 465.0,527.45 465.5,524.56 466.0,523.65 466.5,521.24 467.0,520.18 467.5,518.13 468.0,515.25 468.5,514.28 469.0,512.11 469.5,511.34 470.0,509.65 470.5,508.55 471.0,506.46 471.5,504.65 472.0,503.88 472.5,502.86 473.0,500.89 473.5,499.87 474.0,499.20 474.5,499.15 475.0,497.49 475.5,496.99 476.0,495.53 476.5,495.81 477.0,494.84 477.5,494.44 478.0,494.46 478.5,493.96 479.0,493.55 479.5,493.10 480.0,493.69 480.5,493.95 481.0,493.20 481.5,494.79 482.0,493.97 482.5,494.60 483.0,495.27 483.5,496.01 484.0,496.21 484.5,496.74 485.0,497.79 485.5,498.66 486.0,500.68 486.5,501.30 487.0,502.69 487.5,502.67 488.0,504.02 488.5,506.45 489.0,507.18 489.5,508.65 490.0,510.95 490.5,512.00 491.0,513.10 491.5,514.93 492.0,517.19 492.5,518.25 493.0,520.76 493.5,522.24 494.0,524.31 494.5,525.41 495.0,527.85 495.5,529.61 496.0,531.80 496.5,534.26 497.0,535.45 497.5,537.88 498.0,539.97 498.5,542.65 499.0,544.90 499.5,546.36 500.0,548.06 500.5,550.17 501.0,552.88 501.5,555.23 502.0,556.69 502.5,558.15 503.0,561.18 503.5,562.27 504.0,565.02 504.5,566.69 505.0,568.91 505.5,570.35 506.0,571.98 506.5,572.82 507.0,574.48 507.5,577.23 508.0,578.60 508.5,579.15 509.0,581.68 509.5,582.86 510.0,583.98 510.5,585.70 511.0,586.64 511.5,587.53 512.0,588.56 512.5,588.64 513.0,590.54 513.5,591.41 514.0,591.07 514.5,592.37 515.0,592.34 515.5,593.10 516.0,593.26 516.5,594.24 517.0,594.68 517.5,593.91 518.0,594.36 518.5,594.18 519.0,593.88 519.5,593.53 520.0,593.93 520.5,593.41 521.0,592.11 521.5,592.13 522.0,591.84 522.5,590.62 523.0,590.36 523.5,588.73 524.0,588.85 524.5,586.66 525.0,585.94 525.5,585.08 526.0,582.96 526.5,582.65 527.0,581.30 527.5,580.12 528.0,577.91 528.5,576.05 529.0,574.54 529.5,573.27 530.0,570.97 530.5,570.24 531.0,568.14 531.5,565.79 532.0,563.43 532.5,562.00 533.0,559.97 533.5,557.87 534.0,556.43 534.5,553.60 535.0,551.85 535.5,550.39 536.0,548.25 536.5,545.57 537.0,544.17 537.5,542.34 538.0,539.25 538.5,537.69 539.0,535.65 539.5,533.39 540.0,531.03 540.5,530.16 541.0,527.88 541.5,526.34 542.0,523.91 542.5,521.89 543.0,519.53 543.5,518.00 544.0,516.37 544.5,514.91 545.0,513.00 545.5,511.83 546.0,509.43" fill="none" stroke="#ff4646" stroke-width="1.3" stroke-linejoin="round"/>
<polyline points="89.0,543.40 89.5,543.30 90.0,544.72 90.5,543.64 91.0,543.47 91.5,544.00 92.0,543.17 92.5,543.17 93.0,543.50 93.5,543.33 94.0,543.69 94.5,543.22 95.0,544.76 95.5,543.58 96.0,543.58 96.5,543.77 97.0,544.47 97.5,544.90 98.0,543.79 98.5,543.33 99.0,544.47 99.5,544.59 100.0,544.57 100.5,544.84 101.0,543.64 101.5,543.02 102.0,543.37 102.5,544.29 103.0,543.59 103.5,544.89 104.0,543.30 104.5,544.36 105.0,545.03 105.5,543.73 106.0,544.75 106.5,544.47 107.0,544.91 107.5,544.11 108.0,543.89 108.5,543.36 109.0,544.95 109.5,543.32 110.0,544.81 110.5,544.57 111.0,543.73 111.5,544.33 112.0,544.35 112.5,543.86 113.0,544.58 113.5,543.39 114.0,544.60 114.5,543.30 115.0,543.36 115.5,543.92 116.0,544.97 116.5,543.42 117.0,544.98 117.5,543.99 118.0,544.16 118.5,544.91 119.0,543.73 119.5,543.53 120.0,543.82 120.5,544.21 121.0,543.97 121.5,543.82 122.0,544.57 122.5,543.24 123.0,542.97 123.5,543.37 124.0,543.04 124.5,544.35 125.0,542.99 125.5,544.89 126.0,544.05 126.5,544.76 127.0,544.10 127.5,543.62 128.0,543.57 128.5,544.09 129.0,544.33 129.5,544.64 130.0,544.20 130.5,544.45 131.0,544.63 131.5,543.51 132.0,543.97 132.5,544.13 133.0,544.63 133.5,543.58 134.0,544.63 134.5,544.49 135.0,543.88 135.5,543.58 136.0,543.02 136.5,543.49 137.0,543.07 137.5,543.13 138.0,543.54 138.5,543.55 139.0,544.91 139.5,544.61 140.0,545.01 140.5,543.25 141.0,543.54 141.5,543.73 142.0,544.49 142.5,544.30 143.0,544.70 143.5,543.73 144.0,542.98 144.5,544.40 145.0,544.94 145.5,544.67 146.0,544.30 146.5,543.17 147.0,543.37 147.5,544.09 148.0,544.82 148.5,544.81 149.0,544.72 149.5,543.43 150.0,544.06 150.5,542.98 151.0,543.15 151.5,543.39 152.0,544.05 152.5,543.33 153.0,544.77 153.5,544.81 154.0,543.87 154.5,543.98 155.0,544.60 155.5,544.51 156.0,544.99 156.5,543.15 157.0,543.56 157.5,543.08 158.0,543.00 158.5,544.13 159.0,543.52 159.5,544.24 160.0,543.35 160.5,543.29 161.0,544.76 161.5,545.01 162.0,544.59 162.5,543.82 163.0,544.25 163.5,545.02 164.0,543.32 164.5,543.41 165.0,544.08 165.5,544.95 166.0,543.19 166.5,543.93 167.0,544.89 167.5,544.37 168.0,543.74 168.5,543.20 169.0,544.03 169.5,543.71 170.0,544.61 170.5,544.53 171.0,543.16 171.5,544.24 172.0,544.82 172.5,543.81 173.0,544.77 173.5,544.62 174.0,544.09 174.5,543.82 175.0,543.72 175.5,543.57 176.0,544.13 176.5,544.90 177.0,543.53 177.5,544.92 178.0,544.06 178.5,544.21 179.0,543.64 179.5,543.56 180.0,544.54 180.5,543.69 181.0,543.60 181.5,544.06 182.0,544.74 182.5,543.15 183.0,543.79 183.5,544.91 184.0,544.54 184.5,542.99 185.0,544.56 185.5,544.22 186.0,543.40 186.5,543.33 187.0,543.72 187.5,543.50 188.0,544.96 188.5,544.84 189.0,543.01 189.5,543.37 190.0,544.96 190.5,544.94 191.0,544.54 191.5,543.11 192.0,544.58 192.5,543.64 193.0,543.11 193.5,543.71 194.0,543.13 194.5,544.49 195.0,544.72 195.5,545.00 196.0,543.47 196.5,544.82 197.0,543.02 197.5,543.56 198.0,544.65 198.5,543.36 199.0,544.70 199.5,543.97 200.0,544.82 200.5,543.41 201.0,543.19 201.5,543.14 202.0,545.03 202.5,543.27 203.0,543.88 203.5,543.33 204.0,543.99 204.5,543.75 205.0,543.80 205.5,543.38 206.0,544.88 206.5,544.92 207.0,543.91 207.5,544.43 208.0,544.21 208.5,545.02 209.0,543.49 209.5,544.99 210.0,543.32 210.5,543.35 211.0,544.09 211.5,544.78 212.0,543.69 212.5,544.61 213.0,544.15 213.5,544.81 214.0,543.01 214.5,543.90 215.0,544.31 215.5,544.84 216.0,543.52 216.5,543.28 217.0,543.28 217.5,544.83 218.0,544.27 218.5,544.41 219.0,543.46 219.5,544.73 220.0,543.78 220.5,543.01 221.0,543.44 221.5,545.02 222.0,544.88 222.5,544.80 223.0,543.60 223.5,543.80 224.0,543.96 224.5,544.09 225.0,544.19 225.5,543.77 226.0,543.69 226.5,543.14 227.0,543.52 227.5,543.39 228.0,543.14 228.5,543.30 229.0,543.55 229.5,544.97 230.0,543.63 230.5,543.27 231.0,544.14 231.5,543.22 232.0,544.66 232.5,543.08 233.0,544.12 233.5,543.57 234.0,544.51 234.5,544.41 235.0,544.31 235.5,544.36 236.0,544.84 236.5,544.12 237.0,543.00 237.5,543.68 238.0,543.10 238.5,543.46 239.0,543.30 239.5,542.98 240.0,543.48 240.5,544.47 241.0,544.52 241.5,544.18 242.0,544.99 242.5,544.56 243.0,543.20 243.5,543.13 244.0,544.35 244.5,543.44 245.0,543.43 245.5,543.19 246.0,543.39 246.5,543.93 247.0,544.82 247.5,543.33 248.0,544.39 248.5,543.74 249.0,544.28 249.5,543.92 250.0,543.04 250.5,544.70 251.0,543.94 251.5,543.69 252.0,543.92 252.5,543.09 253.0,544.19 253.5,543.14 254.0,543.61 254.5,543.03 255.0,544.85 255.5,544.60 256.0,544.44 256.5,543.16 257.0,545.01 257.5,544.50 258.0,543.55 258.5,542.99 259.0,544.67 259.5,544.13 260.0,543.61 260.5,543.60 261.0,543.49 261.5,543.48 262.0,544.52 262.5,544.50 263.0,544.98 263.5,543.60 264.0,544.60 264.5,544.50 265.0,543.04 265.5,543.70 266.0,543.81 266.5,543.68 267.0,543.80 267.5,543.60 268.0,544.41 268.5,544.90 269.0,544.90 269.5,545.01 270.0,544.29 270.5,544.74 271.0,544.80 271.5,544.01 272.0,543.03 272.5,543.61 273.0,544.47 273.5,543.44 274.0,544.67 274.5,544.83 275.0,544.41 275.5,544.19 276.0,543.61 276.5,544.11 277.0,543.53 277.5,544.84 278.0,543.10 278.5,544.33 279.0,543.31 279.5,544.97 280.0,543.32 280.5,544.57 281.0,543.26 281.5,543.37 282.0,543.65 282.5,544.46 283.0,545.02 283.5,544.64 284.0,543.16 284.5,544.71 285.0,543.67 285.5,543.82 286.0,543.67 286.5,544.66 287.0,544.74 287.5,544.83 288.0,543.00 288.5,544.24 289.0,543.68 289.5,543.86 290.0,544.57 290.5,544.90 291.0,545.01 291.5,543.27 292.0,544.77 292.5,543.04 293.0,544.28 293.5,543.54 294.0,544.75 294.5,543.40 295.0,544.51 295.5,544.28 296.0,543.95 296.5,544.81 297.0,544.52 297.5,543.39 298.0,544.44 298.5,544.25 299.0,543.45 299.5,544.57 300.0,544.63 300.5,544.58 301.0,544.24 301.5,544.28 302.0,543.71 302.5,544.06 303.0,543.23 303.5,544.93 304.0,543.66 304.5,543.30 305.0,544.55 305.5,544.98 306.0,544.13 306.5,544.80 307.0,544.08 307.5,543.56 308.0,544.84 308.5,544.79 309.0,544.04 309.5,544.68 310.0,544.56 310.5,544.12 311.0,544.79 311.5,544.90 312.0,544.29 312.5,544.06 313.0,543.10 313.5,543.89 314.0,544.89 314.5,544.58 315.0,543.49 315.5,543.87 316.0,543.23 316.5,543.04 317.0,543.26 317.5,544.81 318.0,543.08 318.5,543.95 319.0,544.54 319.5,544.68 320.0,543.24 320.5,544.60 321.0,544.86 321.5,544.49 322.0,543.12 322.5,544.08 323.0,543.52 323.5,544.88 324.0,544.10 324.5,544.38 325.0,544.61 325.5,543.66 326.0,544.29 326.5,544.79 327.0,543.00 327.5,544.04 328.0,544.66 328.5,545.01 329.0,543.68 329.5,543.97 330.0,544.99 330.5,544.06 331.0,543.50 331.5,543.92 332.0,544.55 332.5,544.00 333.0,543.78 333.5,543.69 334.0,544.74 334.5,543.37 335.0,543.08 335.5,543.50 336.0,543.26 336.5,544.27 337.0,543.17 337.5,544.66 338.0,544.57 338.5,543.80 339.0,543.17 339.5,544.87 340.0,544.59 340.5,544.96 341.0,544.13 341.5,544.74 342.0,544.64 342.5,543.48 343.0,543.83 343.5,543.09 344.0,544.20 344.5,543.63 345.0,545.01 345.5,543.07 346.0,544.55 346.5,544.05 347.0,543.98 347.5,543.07 348.0,544.02 348.5,542.98 349.0,543.75 349.5,544.59 350.0,543.31 350.5,544.62 351.0,542.96 351.5,544.09 352.0,544.57 352.5,543.04 353.0,544.37 353.5,544.19 354.0,544.32 354.5,543.65 355.0,544.99 355.5,544.26 356.0,544.70 356.5,543.32 357.0,545.04 357.5,543.78 358.0,544.50 358.5,544.09 359.0,543.87 359.5,543.56 360.0,544.75 360.5,544.54 361.0,544.79 361.5,543.05 362.0,544.73 362.5,544.75 363.0,543.95 363.5,543.83 364.0,543.20 364.5,544.92 365.0,544.55 365.5,544.69 366.0,543.82 366.5,544.10 367.0,544.19 367.5,543.20 368.0,543.66 368.5,543.25 369.0,543.05 369.5,544.48 370.0,543.08 370.5,544.19 371.0,544.93 371.5,543.14 372.0,544.82 372.5,545.00 373.0,544.44 373.5,544.44 374.0,543.03 374.5,543.23 375.0,544.17 375.5,543.94 376.0,543.28 376.5,543.36 377.0,543.68 377.5,543.97 378.0,544.79 378.5,544.53 379.0,543.67 379.5,543.82 380.0,543.38 380.5,543.17 381.0,543.04 381.5,544.64 382.0,544.88 382.5,543.18 383.0,543.85 383.5,544.66 384.0,543.60 384.5,544.51 385.0,544.55 385.5,544.28 386.0,543.95 386.5,543.63 387.0,544.88 387.5,543.50 388.0,543.74 388.5,544.06 389.0,543.64 389.5,543.38 390.0,545.02 390.5,544.05 391.0,543.63 391.5,543.57 392.0,543.69 392.5,544.66 393.0,543.05 393.5,543.41 394.0,544.55 394.5,544.14 395.0,543.05 395.5,544.61 396.0,544.19 396.5,543.04 397.0,543.17 397.5,544.55 398.0,543.51 398.5,544.29 399.0,543.66 399.5,543.45 400.0,544.77 400.5,544.57 401.0,544.59 401.5,544.48 402.0,544.96 402.5,544.75 403.0,544.19 403.5,544.16 404.0,544.87 404.5,543.83 405.0,543.08 405.5,543.84 406.0,544.30 406.5,543.58 407.0,544.13 407.5,544.67 408.0,544.04 408.5,545.00 409.0,543.64 409.5,544.70 410.0,544.27 410.5,543.04 411.0,543.45 411.5,543.30 412.0,543.71 412.5,543.72 413.0,543.58 413.5,543.03 414.0,544.63 414.5,543.45 415.0,544.41 415.5,544.51 416.0,543.33 416.5,543.79 417.0,543.28 417.5,543.22 418.0,543.82 418.5,544.63 419.0,545.00 419.5,543.93 420.0,543.53 420.5,544.47 421.0,544.89 421.5,545.03 422.0,544.68 422.5,543.59 423.0,545.03 423.5,544.56 424.0,544.49 424.5,543.56 425.0,542.99 425.5,545.00 426.0,544.80 426.5,543.10 427.0,543.03 427.5,544.73 428.0,544.34 428.5,543.95 429.0,544.37 429.5,544.17 430.0,544.04 430.5,544.50 431.0,544.92 431.5,544.86 432.0,544.70 432.5,544.85 433.0,543.74 433.5,543.59 434.0,544.49 434.5,543.40 435.0,543.53 435.5,544.33 436.0,544.02 436.5,544.65 437.0,543.11 437.5,543.87 438.0,544.93 438.5,544.72 439.0,543.60 439.5,544.24 440.0,543.55 440.5,544.56 441.0,543.38 441.5,543.37 442.0,544.84 442.5,543.82 443.0,544.64 443.5,543.57 444.0,543.37 444.5,543.40 445.0,544.56 445.5,544.84 446.0,543.66 446.5,543.87 447.0,544.75 447.5,544.64 448.0,543.83 448.5,544.81 449.0,543.72 449.5,544.54 450.0,544.50 450.5,544.16 451.0,543.93 451.5,543.53 452.0,544.97 452.5,543.54 453.0,544.58 453.5,544.43 454.0,543.71 454.5,543.60 455.0,543.76 455.5,543.17 456.0,544.61 456.5,544.39 457.0,543.66 457.5,544.50 458.0,544.71 458.5,544.57 459.0,543.44 459.5,543.32 460.0,543.55 460.5,543.05 461.0,543.39 461.5,544.39 462.0,544.38 462.5,543.54 463.0,544.92 463.5,543.77 464.0,544.85 464.5,544.93 465.0,543.97 465.5,544.72 466.0,543.11 466.5,543.22 467.0,544.08 467.5,544.63 468.0,544.79 468.5,543.99 469.0,543.96 469.5,544.28 470.0,543.55 470.5,543.94 471.0,543.43 471.5,544.82 472.0,544.89 472.5,544.23 473.0,544.03 473.5,544.51 474.0,543.65 474.5,544.58 475.0,544.38 475.5,544.05 476.0,543.56 476.5,543.44 477.0,544.27 477.5,544.11 478.0,543.11 478.5,543.10 479.0,543.75 479.5,544.82 480.0,544.09 480.5,543.72 481.0,544.46 481.5,544.96 482.0,543.00 482.5,543.15 483.0,544.77 483.5,544.07 484.0,543.75 484.5,544.41 485.0,544.89 485.5,543.48 486.0,543.44 486.5,544.13 487.0,544.86 487.5,544.22 488.0,544.84 488.5,543.04 489.0,544.93 489.5,544.44 490.0,543.44 490.5,544.76 491.0,544.82 491.5,544.89 492.0,544.70 492.5,543.93 493.0,543.31 493.5,544.69 494.0,544.68 494.5,543.45 495.0,544.15 495.5,544.34 496.0,544.78 496.5,544.53 497.0,543.02 497.5,544.79 498.0,544.50 498.5,543.50 499.0,543.19 499.5,543.16 500.0,544.06 500.5,543.05 501.0,543.78 501.5,544.44 502.0,544.07 502.5,543.55 503.0,543.52 503.5,544.77 504.0,544.63 504.5,543.05 505.0,544.81 505.5,543.35 506.0,544.33 506.5,544.52 507.0,544.51 507.5,544.06 508.0,542.98 508.5,544.73 509.0,543.27 509.5,544.37 510.0,544.68 510.5,543.49 511.0,544.33 511.5,544.65 512.0,544.17 512.5,543.33 513.0,543.25 513.5,543.84 514.0,545.01 514.5,543.45 515.0,543.78 515.5,543.17 516.0,543.06 516.5,544.36 517.0,543.28 517.5,543.34 518.0,544.48 518.5,544.28 519.0,544.26 519.5,544.30 520.0,544.25 520.5,544.81 521.0,544.57 521.5,543.15 522.0,544.19 522.5,543.72 523.0,543.20 523.5,543.47 524.0,544.53 524.5,543.13 525.0,543.37 525.5,542.98 526.0,543.53 526.5,543.47 527.0,543.35 527.5,544.51 528.0,543.68 528.5,544.25 529.0,543.30 529.5,544.76 530.0,543.92 530.5,544.34 531.0,543.34 531.5,544.32 532.0,543.29 532.5,543.28 533.0,543.22 533.5,544.75 534.0,543.09 534.5,543.49 535.0,543.63 535.5,543.68 536.0,544.94 536.5,543.23 537.0,543.90 537.5,544.09 538.0,544.33 538.5,543.41 539.0,543.42 539.5,543.23 540.0,544.59 540.5,544.33 541.0,544.52 541.5,544.83 542.0,544.36 542.5,544.98 543.0,543.39 543.5,544.57 544.0,544.89 544.5,544.90 545.0,543.50 545.5,544.62 546.0,544.08" fill="none" stroke="#00ff00" stroke-width="1.4" stroke-linejoin="round"/>
</g>
<text transform="translate(62.47,438.75) scale(1.0598,1)" font-size="13.31" font-weight="normal" fill="#000" >3</text>
<text transform="translate(62.27,475.73) scale(1.1033,1)" font-size="13.31" font-weight="normal" fill="#000" >2</text>
<text transform="translate(61.82,512.71) scale(1.1485,1)" font-size="13.53" font-weight="normal" fill="#000" >1</text>
<text transform="translate(62.46,549.69) scale(1.0515,1)" font-size="13.31" font-weight="normal" fill="#000" >0</text>
<text transform="translate(52.85,586.67) scale(1.1417,1)" font-size="13.53" font-weight="normal" fill="#000" >−1</text>
<text transform="translate(52.85,623.65) scale(1.1617,1)" font-size="13.31" font-weight="normal" fill="#000" >−2</text>
<text transform="translate(52.85,660.63) scale(1.1548,1)" font-size="13.31" font-weight="normal" fill="#000" >−3</text>
<rect x="89" y="658" width="1" height="4" fill="#111" />
<text transform="translate(86.36,674.70) scale(0.8200,1)" font-size="12.90" font-weight="normal" fill="#000" >0</text>
<rect x="135" y="658" width="1" height="4" fill="#111" />
<text transform="translate(123.96,674.70) scale(0.8200,1)" font-size="12.90" font-weight="normal" fill="#000" >0.01</text>
<rect x="181" y="658" width="1" height="4" fill="#111" />
<text transform="translate(169.67,674.70) scale(0.8200,1)" font-size="12.90" font-weight="normal" fill="#000" >0.02</text>
<rect x="226" y="658" width="1" height="4" fill="#111" />
<text transform="translate(215.33,674.70) scale(0.8200,1)" font-size="12.90" font-weight="normal" fill="#000" >0.03</text>
<rect x="272" y="658" width="1" height="4" fill="#111" />
<text transform="translate(260.95,674.70) scale(0.8200,1)" font-size="12.90" font-weight="normal" fill="#000" >0.04</text>
<rect x="318" y="658" width="1" height="4" fill="#111" />
<text transform="translate(306.73,674.70) scale(0.8200,1)" font-size="12.90" font-weight="normal" fill="#000" >0.05</text>
<rect x="364" y="658" width="1" height="4" fill="#111" />
<text transform="translate(352.43,674.70) scale(0.8200,1)" font-size="12.90" font-weight="normal" fill="#000" >0.06</text>
<rect x="409" y="658" width="1" height="4" fill="#111" />
<text transform="translate(398.17,674.70) scale(0.8200,1)" font-size="12.90" font-weight="normal" fill="#000" >0.07</text>
<rect x="455" y="658" width="1" height="4" fill="#111" />
<text transform="translate(443.83,674.70) scale(0.8200,1)" font-size="12.90" font-weight="normal" fill="#000" >0.08</text>
<rect x="501" y="658" width="1" height="4" fill="#111" />
<text transform="translate(489.55,674.70) scale(0.8200,1)" font-size="12.90" font-weight="normal" fill="#000" >0.09</text>
<rect x="546" y="658" width="1" height="4" fill="#111" />
<text transform="translate(537.21,674.70) scale(0.8200,1)" font-size="12.90" font-weight="normal" fill="#000" >0.1</text>
<rect x="468" y="154" width="79" height="73" fill="#b3b3b3" />
<rect x="468" y="154" width="79" height="1" fill="#dcdcdc" />
<rect x="468" y="154" width="1" height="73" fill="#dcdcdc" />
<rect x="468" y="226" width="79" height="1" fill="#8c8c8c" />
<rect x="546" y="154" width="1" height="73" fill="#8c8c8c" />
<circle cx="477" cy="167.8" r="5.6" fill="#fff" stroke="#000" stroke-width="1.0"/>
<polygon points="473.70,167.80 477.00,164.50 480.30,167.80 477.00,171.10" fill="#000" stroke="none" />
<text transform="translate(485.85,170.90) scale(0.7684,1)" font-size="13.24" font-weight="normal" fill="#101010" >V1</text>
<rect x="519" y="158" width="23" height="18" fill="#000" />
<rect x="519" y="176" width="24" height="1" fill="#e0e0e0" />
<rect x="542" y="158" width="1" height="19" fill="#e0e0e0" />
<polyline points="520.8,171.4 529.6,161.0 537.9,171.4 541.2,167.0" fill="none" stroke="#ffffff" stroke-width="1.0"/>
<circle cx="477" cy="188.4" r="5.6" fill="#fff" stroke="#000" stroke-width="1.0"/>
<polygon points="473.70,188.40 477.00,185.10 480.30,188.40 477.00,191.70" fill="#000" stroke="none" />
<text transform="translate(485.85,193.80) scale(0.8278,1)" font-size="13.02" font-weight="normal" fill="#101010" >V2</text>
<rect x="519" y="181" width="23" height="18" fill="#000" />
<rect x="519" y="199" width="24" height="1" fill="#e0e0e0" />
<rect x="542" y="181" width="1" height="19" fill="#e0e0e0" />
<polyline points="520.8,195.2 531.4,184.4 541.2,194.2" fill="none" stroke="#ff4646" stroke-width="1.0"/>
<circle cx="477" cy="209.0" r="5.6" fill="#fff" stroke="#000" stroke-width="1.0"/>
<polygon points="473.70,209.00 477.00,205.70 480.30,209.00 477.00,212.30" fill="#000" stroke="none" />
<text transform="translate(485.85,216.60) scale(0.8234,1)" font-size="13.02" font-weight="normal" fill="#101010" >V3</text>
<rect x="519" y="204" width="23" height="18" fill="#000" />
<rect x="519" y="222" width="24" height="1" fill="#e0e0e0" />
<rect x="542" y="204" width="1" height="19" fill="#e0e0e0" />
<polyline points="520.8,217.4 529.6,207.0 537.9,217.4 541.2,213.0" fill="none" stroke="#00ff00" stroke-width="1.0"/>
<rect x="468" y="433" width="79" height="73" fill="#b3b3b3" />
<rect x="468" y="433" width="79" height="1" fill="#dcdcdc" />
<rect x="468" y="433" width="1" height="73" fill="#dcdcdc" />
<rect x="468" y="505" width="79" height="1" fill="#8c8c8c" />
<rect x="546" y="433" width="1" height="73" fill="#8c8c8c" />
<circle cx="477" cy="446.8" r="5.6" fill="#fff" stroke="#000" stroke-width="1.0"/>
<polygon points="473.70,446.80 477.00,443.50 480.30,446.80 477.00,450.10" fill="#000" stroke="none" />
<text transform="translate(485.87,449.90) scale(0.7668,1)" font-size="13.24" font-weight="normal" fill="#101010" >A1</text>
<rect x="519" y="437" width="23" height="18" fill="#000" />
<rect x="519" y="455" width="24" height="1" fill="#e0e0e0" />
<rect x="542" y="437" width="1" height="19" fill="#e0e0e0" />
<polyline points="520.8,450.4 529.6,440.0 537.9,450.4 541.2,446.0" fill="none" stroke="#ffffff" stroke-width="1.0"/>
<circle cx="477" cy="467.4" r="5.6" fill="#fff" stroke="#000" stroke-width="1.0"/>
<polygon points="473.70,467.40 477.00,464.10 480.30,467.40 477.00,470.70" fill="#000" stroke="none" />
<text transform="translate(485.87,472.80) scale(0.8260,1)" font-size="13.02" font-weight="normal" fill="#101010" >A2</text>
<rect x="519" y="460" width="23" height="18" fill="#000" />
<rect x="519" y="478" width="24" height="1" fill="#e0e0e0" />
<rect x="542" y="460" width="1" height="19" fill="#e0e0e0" />
<polyline points="520.8,474.2 531.4,463.4 541.2,473.2" fill="none" stroke="#ff4646" stroke-width="1.0"/>
<circle cx="477" cy="488.0" r="5.6" fill="#fff" stroke="#000" stroke-width="1.0"/>
<polygon points="473.70,488.00 477.00,484.70 480.30,488.00 477.00,491.30" fill="#000" stroke="none" />
<text transform="translate(485.87,495.60) scale(0.8217,1)" font-size="13.02" font-weight="normal" fill="#101010" >A3</text>
<rect x="519" y="483" width="23" height="18" fill="#000" />
<rect x="519" y="501" width="24" height="1" fill="#e0e0e0" />
<rect x="542" y="483" width="1" height="19" fill="#e0e0e0" />
<polyline points="520.8,496.4 529.6,486.0 537.9,496.4 541.2,492.0" fill="none" stroke="#00ff00" stroke-width="1.0"/>
<polygon points="564.20,144.00 570.50,149.50 558.00,149.50" fill="#7c7c7c" stroke="none" />
<rect x="559" y="152" width="5" height="239" fill="#454545" />
<rect x="564" y="152" width="4" height="239" fill="#2e2e2e" />
<polygon points="564.20,400.00 570.50,393.50 558.00,393.50" fill="#7c7c7c" stroke="none" />
<polygon points="545.50,272.70 576.30,264.20 576.30,280.20" fill="#3d96f5" stroke="none" />
<rect x="575" y="264.7" width="1.3" height="15.5" fill="#2a6fc0" />
<polygon points="564.20,425.00 570.50,430.50 558.00,430.50" fill="#a4a4a4" stroke="none" />
<rect x="559" y="433" width="5" height="222" fill="#8c8c8c" />
<rect x="564" y="433" width="4" height="222" fill="#7e7e7e" />
<polygon points="564.20,664.00 570.50,657.50 558.00,657.50" fill="#a4a4a4" stroke="none" />
<polygon points="545.50,543.80 576.30,535.30 576.30,551.30" fill="#7ea6d6" stroke="none" />
<rect x="575" y="535.8" width="1.3" height="15.5" fill="#6f95c4" />
<text transform="translate(577.61,158.70) scale(1.0227,1)" font-size="11.86" font-weight="bold" fill="#0a0a0a" >V Trigger</text>
<text transform="translate(587.81,183.00) scale(1.0906,1)" font-size="11.17" font-weight="bold" fill="#0a0a0a" >Voltage</text>
<text transform="translate(587.53,198.10) scale(0.9905,1)" font-size="11.78" font-weight="bold" fill="#0a0a0a" >Range</text>
<polygon points="622.20,205.80 635.00,211.80 609.50,211.80" fill="#8a8a8a" stroke="none" />
<rect x="611" y="213" width="24" height="93" fill="#d0d0d0" />
<rect x="612" y="214" width="22" height="91" fill="#b6b6b6" />
<rect x="612" y="214" width="1" height="91" fill="#8a8a8a" />
<rect x="612" y="214" width="22" height="1" fill="#8a8a8a" />
<rect x="613" y="282" width="20" height="22" fill="#9c9c9c" />
<rect x="608" y="272" width="30" height="11" fill="#000" />
<rect x="610" y="276" width="26" height="1" fill="#9a9a9a" />
<polygon points="609.50,308.00 635.00,308.00 622.20,315.50" fill="#8a8a8a" stroke="none" />
<text transform="translate(581.74,220.10) scale(0.9151,1)" font-size="12.31" font-weight="normal" fill="#101010" >100</text>
<text transform="translate(588.23,242.20) scale(0.8867,1)" font-size="12.51" font-weight="normal" fill="#101010" >75</text>
<text transform="translate(588.36,264.50) scale(0.8881,1)" font-size="12.31" font-weight="normal" fill="#101010" >50</text>
<text transform="translate(588.25,286.60) scale(0.9001,1)" font-size="12.31" font-weight="normal" fill="#101010" >25</text>
<text transform="translate(593.61,308.30) scale(1.0183,1)" font-size="12.31" font-weight="normal" fill="#101010" >0</text>
<text transform="translate(579.45,339.70) scale(1.1201,1)" font-size="10.76" font-weight="bold" fill="#0a0a0a" >Subtract</text>
<text transform="translate(579.75,354.10) scale(1.0721,1)" font-size="11.02" font-weight="bold" fill="#0a0a0a" >Zero Seq</text>
<rect x="579" y="365" width="64" height="24" fill="#000" />
<rect x="580" y="366" width="62" height="22" fill="#b8b8b8" />
<rect x="580" y="366" width="62" height="1" fill="#f0f0f0" />
<rect x="580" y="366" width="1" height="22" fill="#f0f0f0" />
<rect x="581" y="367" width="60" height="1" fill="#dadada" />
<rect x="581" y="367" width="1" height="20" fill="#dadada" />
<rect x="580" y="387" width="62" height="1" fill="#555" />
<rect x="641" y="366" width="1" height="22" fill="#555" />
<rect x="581" y="386" width="60" height="1" fill="#777" />
<rect x="640" y="367" width="1" height="20" fill="#777" />
<text transform="translate(599.75,381.60) scale(0.8900,1)" font-size="12.16" font-weight="bold" fill="#0a0a0a" >OFF</text>
<rect x="573" y="425" width="52" height="19" fill="#b7b7b7" />
<text transform="translate(574.69,440.00) scale(0.9688,1)" font-size="12.69" font-weight="bold" fill="#7c8189" >I Trigger</text>
<text transform="translate(585.50,465.80) scale(1.0824,1)" font-size="11.16" font-weight="bold" fill="#0a0a0a" >Current</text>
<text transform="translate(585.52,480.50) scale(1.0346,1)" font-size="11.35" font-weight="bold" fill="#0a0a0a" >Range</text>
<polygon points="622.20,487.70 635.00,493.70 609.50,493.70" fill="#8a8a8a" stroke="none" />
<rect x="611" y="495" width="24" height="99" fill="#d0d0d0" />
<rect x="612" y="496" width="22" height="97" fill="#b6b6b6" />
<rect x="612" y="496" width="1" height="97" fill="#8a8a8a" />
<rect x="612" y="496" width="22" height="1" fill="#8a8a8a" />
<rect x="613" y="592" width="20" height="0" fill="#9c9c9c" />
<rect x="608" y="582" width="30" height="11" fill="#000" />
<rect x="610" y="586" width="26" height="1" fill="#9a9a9a" />
<polygon points="609.50,597.00 635.00,597.00 622.20,604.50" fill="#8a8a8a" stroke="none" />
<text transform="translate(588.36,501.70) scale(0.8881,1)" font-size="12.31" font-weight="normal" fill="#101010" >50</text>
<text transform="translate(588.56,520.90) scale(0.8734,1)" font-size="12.31" font-weight="normal" fill="#101010" >40</text>
<text transform="translate(588.39,540.10) scale(0.8860,1)" font-size="12.31" font-weight="normal" fill="#101010" >30</text>
<text transform="translate(588.25,559.30) scale(0.8968,1)" font-size="12.31" font-weight="normal" fill="#101010" >20</text>
<text transform="translate(587.94,578.80) scale(0.9204,1)" font-size="12.31" font-weight="normal" fill="#101010" >10</text>
<text transform="translate(593.61,597.90) scale(1.0183,1)" font-size="12.31" font-weight="normal" fill="#101010" >0</text>
<rect x="584" y="622" width="54" height="36" fill="#000" />
<rect x="585" y="623" width="52" height="34" fill="#b8b8b8" />
<rect x="585" y="623" width="52" height="1" fill="#f0f0f0" />
<rect x="585" y="623" width="1" height="34" fill="#f0f0f0" />
<rect x="586" y="624" width="50" height="1" fill="#dadada" />
<rect x="586" y="624" width="1" height="32" fill="#dadada" />
<rect x="585" y="656" width="52" height="1" fill="#555" />
<rect x="636" y="623" width="1" height="34" fill="#555" />
<rect x="586" y="655" width="50" height="1" fill="#777" />
<rect x="635" y="624" width="1" height="32" fill="#777" />
<text transform="translate(598.25,637.80) scale(1.0949,1)" font-size="10.62" font-weight="bold" fill="#0a0a0a" >Zero</text>
<text transform="translate(595.93,650.40) scale(1.0946,1)" font-size="10.04" font-weight="bold" fill="#0a0a0a" >Amps</text>
<text transform="translate(45.10,288.70) rotate(-90) translate(-0.10,0) scale(0.9793,1)" font-size="14.07" font-weight="bold" fill="#0a0a0a">Volts</text>
<text transform="translate(44.90,560.50) rotate(-90) translate(-0.32,0) scale(0.8909,1)" font-size="14.40" font-weight="bold" fill="#0a0a0a">Amps</text>
<text transform="translate(700.95,137.90) scale(1.0283,1)" font-size="15.45" font-weight="bold" fill="#0a0a0a" >Electrical Measurements</text>
<text transform="translate(682.56,175.00) scale(1.0084,1)" font-size="10.62" font-weight="bold" fill="#0a0a0a" >Ch1 Trigger Source</text>
<rect x="683" y="176" width="99" height="1" fill="#0a0a0a" />
<text transform="translate(682.72,195.00) scale(0.9273,1)" font-size="11.93" font-weight="bold" fill="#0a0a0a" >Amps</text>
<text transform="translate(761.52,193.70) scale(1.0165,1)" font-size="10.76" font-weight="bold" fill="#0a0a0a" >Volts</text>
<polygon points="737.30,188.90 757.50,180.80 757.50,198.20" fill="#b8b8b8" stroke="#4a4a4a" stroke-width="0.9"/>
<rect x="757" y="181" width="3" height="17" fill="#3a3a3a" />
<rect x="758" y="182" width="1" height="15" fill="#7a7a7a" />
<circle cx="739" cy="188.6" r="2.4" fill="#d4d4d4" stroke="#808080" stroke-width="0.8"/>
<text transform="translate(826.74,170.80) scale(1.0076,1)" font-size="11.45" font-weight="bold" fill="#0a0a0a" >Fundamental Frequency</text>
<rect x="837" y="177" width="65" height="28" fill="#c4c4c4" />
<rect x="837" y="177" width="64" height="1" fill="#e4e4e4" />
<rect x="837" y="177" width="1" height="27" fill="#e4e4e4" />
<rect x="837" y="204" width="65" height="1" fill="#5e5e5e" />
<rect x="901" y="177" width="1" height="28" fill="#5e5e5e" />
<rect x="839" y="179" width="61" height="24" fill="#d3d3d3" />
<rect x="839" y="179" width="60" height="1" fill="#6e6e6e" />
<rect x="839" y="179" width="1" height="23" fill="#6e6e6e" />
<rect x="839" y="202" width="61" height="1" fill="#ffffff" />
<rect x="899" y="179" width="1" height="24" fill="#ffffff" />
<text transform="translate(839.84,196.70) scale(1.0609,1)" font-size="15.74" font-weight="normal" fill="#0a0a0a" >60.0</text>
<text transform="translate(909.11,196.70) scale(1.1655,1)" font-size="11.49" font-weight="bold" fill="#0a0a0a" >Hz</text>
<rect x="690" y="213" width="299" height="1" fill="#0a0a0a" />
<rect x="795" y="220" width="1" height="251" fill="#0a0a0a" />
<rect x="925" y="220" width="1" height="253" fill="#0a0a0a" />
<text transform="translate(676.11,234.60) scale(0.9352,1)" font-size="12.59" font-weight="bold" fill="#0a0a0a" >V1 RMS</text>
<rect x="674" y="239" width="115" height="29" fill="#c4c4c4" />
<rect x="674" y="239" width="114" height="1" fill="#e4e4e4" />
<rect x="674" y="239" width="1" height="28" fill="#e4e4e4" />
<rect x="674" y="267" width="115" height="1" fill="#5e5e5e" />
<rect x="788" y="239" width="1" height="29" fill="#5e5e5e" />
<rect x="676" y="241" width="111" height="25" fill="#d3d3d3" />
<rect x="676" y="241" width="110" height="1" fill="#6e6e6e" />
<rect x="676" y="241" width="1" height="24" fill="#6e6e6e" />
<rect x="676" y="265" width="111" height="1" fill="#ffffff" />
<rect x="786" y="241" width="1" height="25" fill="#ffffff" />
<text transform="translate(678.77,259.80) scale(0.9833,1)" font-size="16.46" font-weight="normal" fill="#0a0a0a" >17.34</text>
<path d="M730.7,260.4 L742.7,244.9 M730.7,260.4 L750.0,260.4" stroke="#1a1a1a" stroke-width="1.0" fill="none" />
<text transform="translate(741.55,256.20) scale(1.0644,1)" font-size="10.88" font-weight="bold" fill="#0a0a0a" >-0.7</text>
<text transform="translate(803.11,233.10) scale(0.9748,1)" font-size="11.88" font-weight="bold" fill="#0a0a0a" >A1 RMS</text>
<rect x="802" y="238" width="115" height="29" fill="#c4c4c4" />
<rect x="802" y="238" width="114" height="1" fill="#e4e4e4" />
<rect x="802" y="238" width="1" height="28" fill="#e4e4e4" />
<rect x="802" y="266" width="115" height="1" fill="#5e5e5e" />
<rect x="916" y="238" width="1" height="29" fill="#5e5e5e" />
<rect x="804" y="240" width="111" height="25" fill="#d3d3d3" />
<rect x="804" y="240" width="110" height="1" fill="#6e6e6e" />
<rect x="804" y="240" width="1" height="24" fill="#6e6e6e" />
<rect x="804" y="264" width="111" height="1" fill="#ffffff" />
<rect x="914" y="240" width="1" height="25" fill="#ffffff" />
<text transform="translate(806.36,258.70) scale(1.0114,1)" font-size="16.31" font-weight="normal" fill="#0a0a0a" >0.94</text>
<path d="M857.2,259.6 L869.0,244.5 M857.2,259.6 L876.2,259.6" stroke="#1a1a1a" stroke-width="1.0" fill="none" />
<text transform="translate(868.17,255.80) scale(1.0191,1)" font-size="10.88" font-weight="bold" fill="#0a0a0a" >-76.2</text>
<text transform="translate(937.41,234.10) scale(1.0456,1)" font-size="11.45" font-weight="bold" fill="#0a0a0a" >Ch1 Watts</text>
<rect x="937" y="238" width="66" height="29" fill="#c4c4c4" />
<rect x="937" y="238" width="65" height="1" fill="#e4e4e4" />
<rect x="937" y="238" width="1" height="28" fill="#e4e4e4" />
<rect x="937" y="266" width="66" height="1" fill="#5e5e5e" />
<rect x="1002" y="238" width="1" height="29" fill="#5e5e5e" />
<rect x="939" y="240" width="62" height="25" fill="#d3d3d3" />
<rect x="939" y="240" width="61" height="1" fill="#6e6e6e" />
<rect x="939" y="240" width="1" height="24" fill="#6e6e6e" />
<rect x="939" y="264" width="62" height="1" fill="#ffffff" />
<rect x="1000" y="240" width="1" height="25" fill="#ffffff" />
<text transform="translate(941.65,258.70) scale(0.9283,1)" font-size="16.58" font-weight="normal" fill="#0a0a0a" >4.1</text>
<text transform="translate(676.11,295.60) scale(0.9352,1)" font-size="12.59" font-weight="bold" fill="#0a0a0a" >V2 RMS</text>
<rect x="674" y="300" width="115" height="29" fill="#c4c4c4" />
<rect x="674" y="300" width="114" height="1" fill="#e4e4e4" />
<rect x="674" y="300" width="1" height="28" fill="#e4e4e4" />
<rect x="674" y="328" width="115" height="1" fill="#5e5e5e" />
<rect x="788" y="300" width="1" height="29" fill="#5e5e5e" />
<rect x="676" y="302" width="111" height="25" fill="#d3d3d3" />
<rect x="676" y="302" width="110" height="1" fill="#6e6e6e" />
<rect x="676" y="302" width="1" height="24" fill="#6e6e6e" />
<rect x="676" y="326" width="111" height="1" fill="#ffffff" />
<rect x="786" y="302" width="1" height="25" fill="#ffffff" />
<text transform="translate(678.76,320.80) scale(0.9895,1)" font-size="16.46" font-weight="normal" fill="#0a0a0a" >17.58</text>
<path d="M730.7,321.4 L742.7,305.9 M730.7,321.4 L750.0,321.4" stroke="#1a1a1a" stroke-width="1.0" fill="none" />
<text transform="translate(742.37,317.20) scale(0.9772,1)" font-size="10.88" font-weight="bold" fill="#0a0a0a" >59.4</text>
<text transform="translate(803.11,294.10) scale(0.9748,1)" font-size="11.88" font-weight="bold" fill="#0a0a0a" >A2 RMS</text>
<rect x="802" y="299" width="115" height="29" fill="#c4c4c4" />
<rect x="802" y="299" width="114" height="1" fill="#e4e4e4" />
<rect x="802" y="299" width="1" height="28" fill="#e4e4e4" />
<rect x="802" y="327" width="115" height="1" fill="#5e5e5e" />
<rect x="916" y="299" width="1" height="29" fill="#5e5e5e" />
<rect x="804" y="301" width="111" height="25" fill="#d3d3d3" />
<rect x="804" y="301" width="110" height="1" fill="#6e6e6e" />
<rect x="804" y="301" width="1" height="24" fill="#6e6e6e" />
<rect x="804" y="325" width="111" height="1" fill="#ffffff" />
<rect x="914" y="301" width="1" height="25" fill="#ffffff" />
<text transform="translate(806.36,319.70) scale(1.0195,1)" font-size="16.31" font-weight="normal" fill="#0a0a0a" >0.96</text>
<path d="M857.2,320.6 L869.0,305.5 M857.2,320.6 L876.2,320.6" stroke="#1a1a1a" stroke-width="1.0" fill="none" />
<text transform="translate(868.44,316.80) scale(1.0092,1)" font-size="10.88" font-weight="bold" fill="#0a0a0a" >42.6</text>
<text transform="translate(937.41,295.10) scale(1.0456,1)" font-size="11.45" font-weight="bold" fill="#0a0a0a" >Ch2 Watts</text>
<rect x="937" y="299" width="66" height="29" fill="#c4c4c4" />
<rect x="937" y="299" width="65" height="1" fill="#e4e4e4" />
<rect x="937" y="299" width="1" height="28" fill="#e4e4e4" />
<rect x="937" y="327" width="66" height="1" fill="#5e5e5e" />
<rect x="1002" y="299" width="1" height="29" fill="#5e5e5e" />
<rect x="939" y="301" width="62" height="25" fill="#d3d3d3" />
<rect x="939" y="301" width="61" height="1" fill="#6e6e6e" />
<rect x="939" y="301" width="1" height="24" fill="#6e6e6e" />
<rect x="939" y="325" width="62" height="1" fill="#ffffff" />
<rect x="1000" y="301" width="1" height="25" fill="#ffffff" />
<text transform="translate(941.99,319.70) scale(0.9767,1)" font-size="16.31" font-weight="normal" fill="#0a0a0a" >15.6</text>
<text transform="translate(676.11,356.60) scale(0.9352,1)" font-size="12.59" font-weight="bold" fill="#0a0a0a" >V3 RMS</text>
<rect x="674" y="361" width="115" height="29" fill="#c4c4c4" />
<rect x="674" y="361" width="114" height="1" fill="#e4e4e4" />
<rect x="674" y="361" width="1" height="28" fill="#e4e4e4" />
<rect x="674" y="389" width="115" height="1" fill="#5e5e5e" />
<rect x="788" y="361" width="1" height="29" fill="#5e5e5e" />
<rect x="676" y="363" width="111" height="25" fill="#d3d3d3" />
<rect x="676" y="363" width="110" height="1" fill="#6e6e6e" />
<rect x="676" y="363" width="1" height="24" fill="#6e6e6e" />
<rect x="676" y="387" width="111" height="1" fill="#ffffff" />
<rect x="786" y="363" width="1" height="25" fill="#ffffff" />
<text transform="translate(678.69,381.80) scale(0.9611,1)" font-size="16.46" font-weight="normal" fill="#0a0a0a" >0.01</text>
<path d="M730.7,382.4 L742.7,366.9 M730.7,382.4 L750.0,382.4" stroke="#1a1a1a" stroke-width="1.0" fill="none" />
<text transform="translate(742.33,378.20) scale(0.9791,1)" font-size="10.88" font-weight="bold" fill="#0a0a0a" >91.4</text>
<text transform="translate(803.11,355.10) scale(0.9748,1)" font-size="11.88" font-weight="bold" fill="#0a0a0a" >A3 RMS</text>
<rect x="802" y="360" width="115" height="29" fill="#c4c4c4" />
<rect x="802" y="360" width="114" height="1" fill="#e4e4e4" />
<rect x="802" y="360" width="1" height="28" fill="#e4e4e4" />
<rect x="802" y="388" width="115" height="1" fill="#5e5e5e" />
<rect x="916" y="360" width="1" height="29" fill="#5e5e5e" />
<rect x="804" y="362" width="111" height="25" fill="#d3d3d3" />
<rect x="804" y="362" width="110" height="1" fill="#6e6e6e" />
<rect x="804" y="362" width="1" height="24" fill="#6e6e6e" />
<rect x="804" y="386" width="111" height="1" fill="#ffffff" />
<rect x="914" y="362" width="1" height="25" fill="#ffffff" />
<text transform="translate(806.37,380.70) scale(1.0031,1)" font-size="16.31" font-weight="normal" fill="#0a0a0a" >0.03</text>
<path d="M857.2,381.6 L869.0,366.5 M857.2,381.6 L876.2,381.6" stroke="#1a1a1a" stroke-width="1.0" fill="none" />
<text transform="translate(868.18,377.80) scale(0.9870,1)" font-size="11.05" font-weight="bold" fill="#0a0a0a" >-71.4</text>
<text transform="translate(937.41,356.10) scale(1.0456,1)" font-size="11.45" font-weight="bold" fill="#0a0a0a" >Ch3 Watts</text>
<rect x="937" y="360" width="66" height="29" fill="#c4c4c4" />
<rect x="937" y="360" width="65" height="1" fill="#e4e4e4" />
<rect x="937" y="360" width="1" height="28" fill="#e4e4e4" />
<rect x="937" y="388" width="66" height="1" fill="#5e5e5e" />
<rect x="1002" y="360" width="1" height="29" fill="#5e5e5e" />
<rect x="939" y="362" width="62" height="25" fill="#d3d3d3" />
<rect x="939" y="362" width="61" height="1" fill="#6e6e6e" />
<rect x="939" y="362" width="1" height="24" fill="#6e6e6e" />
<rect x="939" y="386" width="62" height="1" fill="#ffffff" />
<rect x="1000" y="362" width="1" height="25" fill="#ffffff" />
<text transform="translate(941.74,380.70) scale(1.0681,1)" font-size="16.31" font-weight="normal" fill="#0a0a0a" >-0.0</text>
<text transform="translate(687.14,415.60) scale(1.1112,1)" font-size="12.83" font-weight="bold" fill="#0a0a0a" >Avg Volts</text>
<rect x="686" y="424" width="80" height="29" fill="#c4c4c4" />
<rect x="686" y="424" width="79" height="1" fill="#e4e4e4" />
<rect x="686" y="424" width="1" height="28" fill="#e4e4e4" />
<rect x="686" y="452" width="80" height="1" fill="#5e5e5e" />
<rect x="765" y="424" width="1" height="29" fill="#5e5e5e" />
<rect x="688" y="426" width="76" height="25" fill="#d3d3d3" />
<rect x="688" y="426" width="75" height="1" fill="#6e6e6e" />
<rect x="688" y="426" width="1" height="24" fill="#6e6e6e" />
<rect x="688" y="450" width="76" height="1" fill="#ffffff" />
<rect x="763" y="426" width="1" height="25" fill="#ffffff" />
<text transform="translate(690.56,444.60) scale(1.1429,1)" font-size="16.03" font-weight="bold" fill="#0a0a0a" >11.64</text>
<text transform="translate(815.02,414.00) scale(0.9961,1)" font-size="15.13" font-weight="bold" fill="#0a0a0a" >Avg Amps</text>
<rect x="817" y="424" width="80" height="29" fill="#c4c4c4" />
<rect x="817" y="424" width="79" height="1" fill="#e4e4e4" />
<rect x="817" y="424" width="1" height="28" fill="#e4e4e4" />
<rect x="817" y="452" width="80" height="1" fill="#5e5e5e" />
<rect x="896" y="424" width="1" height="29" fill="#5e5e5e" />
<rect x="819" y="426" width="76" height="25" fill="#d3d3d3" />
<rect x="819" y="426" width="75" height="1" fill="#6e6e6e" />
<rect x="819" y="426" width="1" height="24" fill="#6e6e6e" />
<rect x="819" y="450" width="76" height="1" fill="#ffffff" />
<rect x="894" y="426" width="1" height="25" fill="#ffffff" />
<text transform="translate(821.27,444.50) scale(1.0597,1)" font-size="17.17" font-weight="bold" fill="#0a0a0a" >0.64</text>
<text transform="translate(930.43,415.50) scale(1.0183,1)" font-size="14.69" font-weight="bold" fill="#0a0a0a" >Tot Power</text>
<rect x="937" y="424" width="66" height="29" fill="#c4c4c4" />
<rect x="937" y="424" width="65" height="1" fill="#e4e4e4" />
<rect x="937" y="424" width="1" height="28" fill="#e4e4e4" />
<rect x="937" y="452" width="66" height="1" fill="#5e5e5e" />
<rect x="1002" y="424" width="1" height="29" fill="#5e5e5e" />
<rect x="939" y="426" width="62" height="25" fill="#d3d3d3" />
<rect x="939" y="426" width="61" height="1" fill="#6e6e6e" />
<rect x="939" y="426" width="1" height="24" fill="#6e6e6e" />
<rect x="939" y="450" width="62" height="1" fill="#ffffff" />
<rect x="1000" y="426" width="1" height="25" fill="#ffffff" />
<text transform="translate(942.59,444.50) scale(1.0310,1)" font-size="17.17" font-weight="bold" fill="#0a0a0a" >19.8</text>
<rect x="681" y="492" width="123" height="18" fill="#c9c9c9" />
<text transform="translate(681.67,505.10) scale(0.9535,1)" font-size="12.00" font-weight="bold" fill="#787d85" >Sampling Period (mS)</text>
<rect x="690" y="514" width="2" height="18" fill="#ababab" />
<rect x="987" y="514" width="2" height="18" fill="#ababab" />
<rect x="692" y="514" width="295" height="18" fill="#8e8e8e" />
<rect x="692" y="514" width="295" height="1" fill="#7a7a7a" />
<rect x="692" y="514" width="1" height="18" fill="#7a7a7a" />
<rect x="692" y="532" width="295" height="1" fill="#c4c4c4" />
<rect x="683" y="513" width="7" height="20" fill="#d2d2d2" />
<polygon points="683.80,523.00 689.50,514.50 689.50,531.50" fill="#c6c6c6" stroke="#7a7a7a" stroke-width="0.7"/>
<rect x="988" y="513" width="8" height="20" fill="#d2d2d2" />
<polygon points="995.20,523.00 988.50,514.50 988.50,531.50" fill="#c6c6c6" stroke="#7a7a7a" stroke-width="0.7"/>
<rect x="891" y="511" width="10" height="24" fill="#9dcaf6" />
<rect x="891" y="511" width="1" height="24" fill="#cfe6ff" />
<rect x="900" y="511" width="1" height="24" fill="#7aaee6" />
<rect x="895" y="511" width="1" height="24" fill="#dcefff" />
<rect x="896" y="511" width="1" height="24" fill="#6f9fd6" />
<rect x="891" y="511" width="10" height="1" fill="#cfe6ff" />
<rect x="891" y="534" width="10" height="1" fill="#7aaee6" />
<rect x="683" y="536" width="317" height="22" fill="#cfcfcf" />
<rect x="693" y="536" width="1" height="6" fill="#606060" />
<rect x="714" y="536" width="1" height="3" fill="#606060" />
<rect x="726" y="536" width="1" height="3" fill="#606060" />
<rect x="734" y="536" width="1" height="3" fill="#606060" />
<rect x="741" y="536" width="1" height="3" fill="#606060" />
<rect x="746" y="536" width="1" height="3" fill="#606060" />
<rect x="751" y="536" width="1" height="3" fill="#606060" />
<rect x="755" y="536" width="1" height="3" fill="#606060" />
<rect x="758" y="536" width="1" height="3" fill="#606060" />
<rect x="761" y="536" width="1" height="6" fill="#606060" />
<rect x="781" y="536" width="1" height="3" fill="#606060" />
<rect x="793" y="536" width="1" height="3" fill="#606060" />
<rect x="802" y="536" width="1" height="3" fill="#606060" />
<rect x="808" y="536" width="1" height="3" fill="#606060" />
<rect x="814" y="536" width="1" height="3" fill="#606060" />
<rect x="818" y="536" width="1" height="3" fill="#606060" />
<rect x="822" y="536" width="1" height="3" fill="#606060" />
<rect x="826" y="536" width="1" height="3" fill="#606060" />
<rect x="829" y="536" width="1" height="6" fill="#606060" />
<rect x="849" y="536" width="1" height="3" fill="#606060" />
<rect x="861" y="536" width="1" height="3" fill="#606060" />
<rect x="870" y="536" width="1" height="3" fill="#606060" />
<rect x="876" y="536" width="1" height="3" fill="#606060" />
<rect x="881" y="536" width="1" height="3" fill="#606060" />
<rect x="886" y="536" width="1" height="3" fill="#606060" />
<rect x="890" y="536" width="1" height="3" fill="#606060" />
<rect x="893" y="536" width="1" height="3" fill="#606060" />
<rect x="896" y="536" width="1" height="6" fill="#606060" />
<rect x="917" y="536" width="1" height="3" fill="#606060" />
<rect x="929" y="536" width="1" height="3" fill="#606060" />
<rect x="937" y="536" width="1" height="3" fill="#606060" />
<rect x="944" y="536" width="1" height="3" fill="#606060" />
<rect x="949" y="536" width="1" height="3" fill="#606060" />
<rect x="954" y="536" width="1" height="3" fill="#606060" />
<rect x="958" y="536" width="1" height="3" fill="#606060" />
<rect x="961" y="536" width="1" height="3" fill="#606060" />
<rect x="964" y="536" width="1" height="6" fill="#606060" />
<rect x="985" y="536" width="1" height="3" fill="#606060" />
<rect x="985" y="536" width="1" height="6" fill="#606060" />
<text transform="translate(683.52,553.10) scale(0.9380,1)" font-size="12.74" font-weight="bold" fill="#787d85" >0.1</text>
<text transform="translate(757.26,553.10) scale(0.9112,1)" font-size="12.95" font-weight="bold" fill="#787d85" >1</text>
<text transform="translate(821.77,553.10) scale(0.9184,1)" font-size="12.74" font-weight="bold" fill="#787d85" >10</text>
<text transform="translate(885.20,553.10) scale(1.0033,1)" font-size="12.74" font-weight="bold" fill="#787d85" >100</text>
<text transform="translate(969.96,553.10) scale(0.9865,1)" font-size="12.74" font-weight="bold" fill="#787d85" >2000</text>
<text transform="translate(688.39,588.00) scale(1.0224,1)" font-size="12.00" font-weight="bold" fill="#0a0a0a" >Filter</text>
<rect x="679" y="594" width="57" height="26" fill="#000" />
<rect x="680" y="595" width="55" height="24" fill="#b8b8b8" />
<rect x="680" y="595" width="55" height="1" fill="#f0f0f0" />
<rect x="680" y="595" width="1" height="24" fill="#f0f0f0" />
<rect x="681" y="596" width="53" height="1" fill="#dadada" />
<rect x="681" y="596" width="1" height="22" fill="#dadada" />
<rect x="680" y="618" width="55" height="1" fill="#555" />
<rect x="734" y="595" width="1" height="24" fill="#555" />
<rect x="681" y="617" width="53" height="1" fill="#777" />
<rect x="733" y="596" width="1" height="22" fill="#777" />
<text transform="translate(695.55,611.80) scale(0.8679,1)" font-size="12.59" font-weight="bold" fill="#0a0a0a" >OFF</text>
<rect x="762" y="570" width="126" height="18" fill="#c9c9c9" />
<text transform="translate(762.51,583.20) scale(0.9900,1)" font-size="12.00" font-weight="bold" fill="#787d85" >Cutoff Frequency (Hz)</text>
<rect x="760" y="596" width="2" height="18" fill="#ababab" />
<rect x="990" y="596" width="2" height="18" fill="#ababab" />
<rect x="762" y="596" width="228" height="18" fill="#8e8e8e" />
<rect x="762" y="596" width="228" height="1" fill="#7a7a7a" />
<rect x="762" y="596" width="1" height="18" fill="#7a7a7a" />
<rect x="762" y="614" width="228" height="1" fill="#c4c4c4" />
<rect x="753" y="595" width="7" height="21" fill="#d2d2d2" />
<polygon points="753.80,605.50 759.50,596.50 759.50,614.50" fill="#c6c6c6" stroke="#7a7a7a" stroke-width="0.7"/>
<rect x="991" y="595" width="8" height="21" fill="#d2d2d2" />
<polygon points="998.20,605.50 991.50,596.50 991.50,614.50" fill="#c6c6c6" stroke="#7a7a7a" stroke-width="0.7"/>
<rect x="867" y="589" width="14" height="7" fill="#c4c4c4" />
<rect x="867" y="615" width="14" height="7" fill="#d0d0d0" />
<rect x="751" y="622" width="260" height="22" fill="#cfcfcf" />
<rect x="763" y="622" width="1" height="6" fill="#606060" />
<rect x="786" y="622" width="1" height="3" fill="#606060" />
<rect x="799" y="622" width="1" height="3" fill="#606060" />
<rect x="808" y="622" width="1" height="3" fill="#606060" />
<rect x="816" y="622" width="1" height="3" fill="#606060" />
<rect x="822" y="622" width="1" height="3" fill="#606060" />
<rect x="827" y="622" width="1" height="3" fill="#606060" />
<rect x="831" y="622" width="1" height="3" fill="#606060" />
<rect x="835" y="622" width="1" height="3" fill="#606060" />
<rect x="838" y="622" width="1" height="6" fill="#606060" />
<rect x="861" y="622" width="1" height="3" fill="#606060" />
<rect x="874" y="622" width="1" height="3" fill="#606060" />
<rect x="883" y="622" width="1" height="3" fill="#606060" />
<rect x="890" y="622" width="1" height="3" fill="#606060" />
<rect x="896" y="622" width="1" height="3" fill="#606060" />
<rect x="901" y="622" width="1" height="3" fill="#606060" />
<rect x="906" y="622" width="1" height="3" fill="#606060" />
<rect x="910" y="622" width="1" height="3" fill="#606060" />
<rect x="913" y="622" width="1" height="6" fill="#606060" />
<rect x="935" y="622" width="1" height="3" fill="#606060" />
<rect x="949" y="622" width="1" height="3" fill="#606060" />
<rect x="958" y="622" width="1" height="3" fill="#606060" />
<rect x="965" y="622" width="1" height="3" fill="#606060" />
<rect x="971" y="622" width="1" height="3" fill="#606060" />
<rect x="976" y="622" width="1" height="3" fill="#606060" />
<rect x="981" y="622" width="1" height="3" fill="#606060" />
<rect x="984" y="622" width="1" height="3" fill="#606060" />
<rect x="988" y="622" width="1" height="6" fill="#606060" />
<polygon points="867.30,589.00 880.00,589.00 873.60,620.00" fill="#8cc4ff" stroke="none" />
<path d="M873.6,605 L873.6,620" stroke="#4a7fc0" stroke-width="0.8" fill="none" />
<text transform="translate(752.20,638.70) scale(1.1024,1)" font-size="11.59" font-weight="bold" fill="#787d85" >100</text>
<text transform="translate(824.23,638.70) scale(1.0573,1)" font-size="11.59" font-weight="bold" fill="#787d85" >1000</text>
<text transform="translate(894.21,638.70) scale(1.0890,1)" font-size="11.59" font-weight="bold" fill="#787d85" >10000</text>
<text transform="translate(966.21,638.70) scale(1.0857,1)" font-size="11.59" font-weight="bold" fill="#787d85" >100000</text>
<rect x="127" y="705" width="79" height="41" fill="#000" />
<rect x="128" y="706" width="77" height="39" fill="#b8b8b8" />
<rect x="128" y="706" width="77" height="1" fill="#555" />
<rect x="128" y="706" width="1" height="39" fill="#555" />
<rect x="129" y="707" width="75" height="1" fill="#777" />
<rect x="129" y="707" width="1" height="37" fill="#777" />
<rect x="128" y="744" width="77" height="1" fill="#f0f0f0" />
<rect x="204" y="706" width="1" height="39" fill="#f0f0f0" />
<rect x="129" y="743" width="75" height="1" fill="#dadada" />
<rect x="203" y="707" width="1" height="37" fill="#dadada" />
<text transform="translate(147.46,730.70) scale(0.9324,1)" font-size="13.53" font-weight="bold" fill="#ff0000" >Pause</text>
<rect x="244" y="705" width="81" height="41" fill="#000" />
<rect x="245" y="706" width="79" height="39" fill="#b8b8b8" />
<rect x="245" y="706" width="79" height="1" fill="#f0f0f0" />
<rect x="245" y="706" width="1" height="39" fill="#f0f0f0" />
<rect x="246" y="707" width="77" height="1" fill="#dadada" />
<rect x="246" y="707" width="1" height="37" fill="#dadada" />
<rect x="245" y="744" width="79" height="1" fill="#555" />
<rect x="323" y="706" width="1" height="39" fill="#555" />
<rect x="246" y="743" width="77" height="1" fill="#777" />
<rect x="322" y="707" width="1" height="37" fill="#777" />
<text transform="translate(270.70,722.70) scale(0.8292,1)" font-size="12.74" font-weight="bold" fill="#0a0a0a" >Save</text>
<text transform="translate(269.70,736.00) scale(0.9453,1)" font-size="12.80" font-weight="bold" fill="#0a0a0a" >Data</text>
<rect x="373" y="708" width="180" height="20" fill="#333333" />
<rect x="373" y="708" width="180" height="1" fill="#222" />
<rect x="373" y="727" width="180" height="1" fill="#555" />
<polygon points="363.50,718.00 372.00,707.00 372.00,728.00" fill="#8a8a8a" stroke="#707070" stroke-width="0.6"/>
<polygon points="562.00,718.00 553.00,707.00 553.00,728.00" fill="#8a8a8a" stroke="#707070" stroke-width="0.6"/>
<rect x="369" y="705" width="9" height="27" fill="#3393fb" />
<rect x="369" y="705" width="1" height="27" fill="#86c4ff" />
<rect x="377" y="705" width="1" height="27" fill="#1458a8" />
<rect x="372" y="705" width="1" height="27" fill="#a8d6ff" />
<rect x="373" y="705" width="1" height="27" fill="#0f4c96" />
<rect x="369" y="731" width="9" height="1" fill="#1458a8" />
<rect x="373" y="733" width="1" height="4" fill="#111" />
<rect x="378" y="733" width="1" height="2" fill="#111" />
<rect x="387" y="733" width="1" height="2" fill="#111" />
<rect x="396" y="733" width="1" height="2" fill="#111" />
<rect x="405" y="733" width="1" height="2" fill="#111" />
<rect x="414" y="733" width="1" height="4" fill="#111" />
<rect x="423" y="733" width="1" height="2" fill="#111" />
<rect x="433" y="733" width="1" height="2" fill="#111" />
<rect x="442" y="733" width="1" height="2" fill="#111" />
<rect x="451" y="733" width="1" height="2" fill="#111" />
<rect x="460" y="733" width="1" height="4" fill="#111" />
<rect x="469" y="733" width="1" height="2" fill="#111" />
<rect x="478" y="733" width="1" height="2" fill="#111" />
<rect x="487" y="733" width="1" height="2" fill="#111" />
<rect x="497" y="733" width="1" height="2" fill="#111" />
<rect x="506" y="733" width="1" height="4" fill="#111" />
<rect x="515" y="733" width="1" height="2" fill="#111" />
<rect x="524" y="733" width="1" height="2" fill="#111" />
<rect x="533" y="733" width="1" height="2" fill="#111" />
<rect x="542" y="733" width="1" height="2" fill="#111" />
<rect x="552" y="733" width="1" height="4" fill="#111" />
<text transform="translate(370.45,749.80) scale(0.8643,1)" font-size="12.07" font-weight="normal" fill="#0a0a0a" >1</text>
<text transform="translate(407.29,749.80) scale(1.0128,1)" font-size="11.88" font-weight="normal" fill="#0a0a0a" >10</text>
<text transform="translate(453.14,749.80) scale(1.0279,1)" font-size="11.88" font-weight="normal" fill="#0a0a0a" >20</text>
<text transform="translate(499.09,749.80) scale(1.0155,1)" font-size="11.88" font-weight="normal" fill="#0a0a0a" >30</text>
<text transform="translate(545.06,749.80) scale(1.0010,1)" font-size="11.88" font-weight="normal" fill="#0a0a0a" >40</text>
<text transform="translate(571.65,720.30) scale(0.9669,1)" font-size="12.07" font-weight="bold" fill="#0a0a0a" >Zoom</text>
<rect x="657" y="708" width="190" height="17" fill="#333333" />
<rect x="657" y="708" width="190" height="1" fill="#222" />
<rect x="657" y="724" width="190" height="1" fill="#555" />
<polygon points="647.00,716.50 655.00,707.00 655.00,725.00" fill="#8a8a8a" stroke="#707070" stroke-width="0.6"/>
<polygon points="855.00,716.50 847.00,707.00 847.00,725.00" fill="#8a8a8a" stroke="#707070" stroke-width="0.6"/>
<rect x="652" y="706" width="9" height="22" fill="#3393fb" />
<rect x="652" y="706" width="1" height="22" fill="#86c4ff" />
<rect x="660" y="706" width="1" height="22" fill="#1458a8" />
<rect x="655" y="706" width="1" height="22" fill="#a8d6ff" />
<rect x="656" y="706" width="1" height="22" fill="#0f4c96" />
<rect x="652" y="727" width="9" height="1" fill="#1458a8" />
<rect x="656" y="730" width="1" height="5" fill="#111" />
<rect x="665" y="730" width="1" height="2" fill="#111" />
<rect x="675" y="730" width="1" height="2" fill="#111" />
<rect x="684" y="730" width="1" height="2" fill="#111" />
<rect x="694" y="730" width="1" height="5" fill="#111" />
<rect x="703" y="730" width="1" height="2" fill="#111" />
<rect x="712" y="730" width="1" height="2" fill="#111" />
<rect x="722" y="730" width="1" height="2" fill="#111" />
<rect x="731" y="730" width="1" height="5" fill="#111" />
<rect x="741" y="730" width="1" height="2" fill="#111" />
<rect x="750" y="730" width="1" height="2" fill="#111" />
<rect x="759" y="730" width="1" height="2" fill="#111" />
<rect x="769" y="730" width="1" height="5" fill="#111" />
<rect x="778" y="730" width="1" height="2" fill="#111" />
<rect x="788" y="730" width="1" height="2" fill="#111" />
<rect x="797" y="730" width="1" height="2" fill="#111" />
<rect x="806" y="730" width="1" height="5" fill="#111" />
<rect x="816" y="730" width="1" height="2" fill="#111" />
<rect x="825" y="730" width="1" height="2" fill="#111" />
<rect x="835" y="730" width="1" height="2" fill="#111" />
<rect x="844" y="730" width="1" height="5" fill="#111" />
<text transform="translate(652.51,746.90) scale(0.9416,1)" font-size="13.31" font-weight="normal" fill="#0a0a0a" >0</text>
<text transform="translate(685.39,746.90) scale(0.8950,1)" font-size="13.31" font-weight="normal" fill="#0a0a0a" >0.2</text>
<text transform="translate(723.00,746.90) scale(0.8806,1)" font-size="13.31" font-weight="normal" fill="#0a0a0a" >0.4</text>
<text transform="translate(760.59,746.90) scale(0.8907,1)" font-size="13.31" font-weight="normal" fill="#0a0a0a" >0.6</text>
<text transform="translate(798.19,746.90) scale(0.8907,1)" font-size="13.31" font-weight="normal" fill="#0a0a0a" >0.8</text>
<text transform="translate(840.95,746.90) scale(0.7714,1)" font-size="13.53" font-weight="normal" fill="#0a0a0a" >1</text>
<text transform="translate(860.57,720.20) scale(0.9521,1)" font-size="11.59" font-weight="bold" fill="#0a0a0a" >Position</text>
</svg></body></html>
